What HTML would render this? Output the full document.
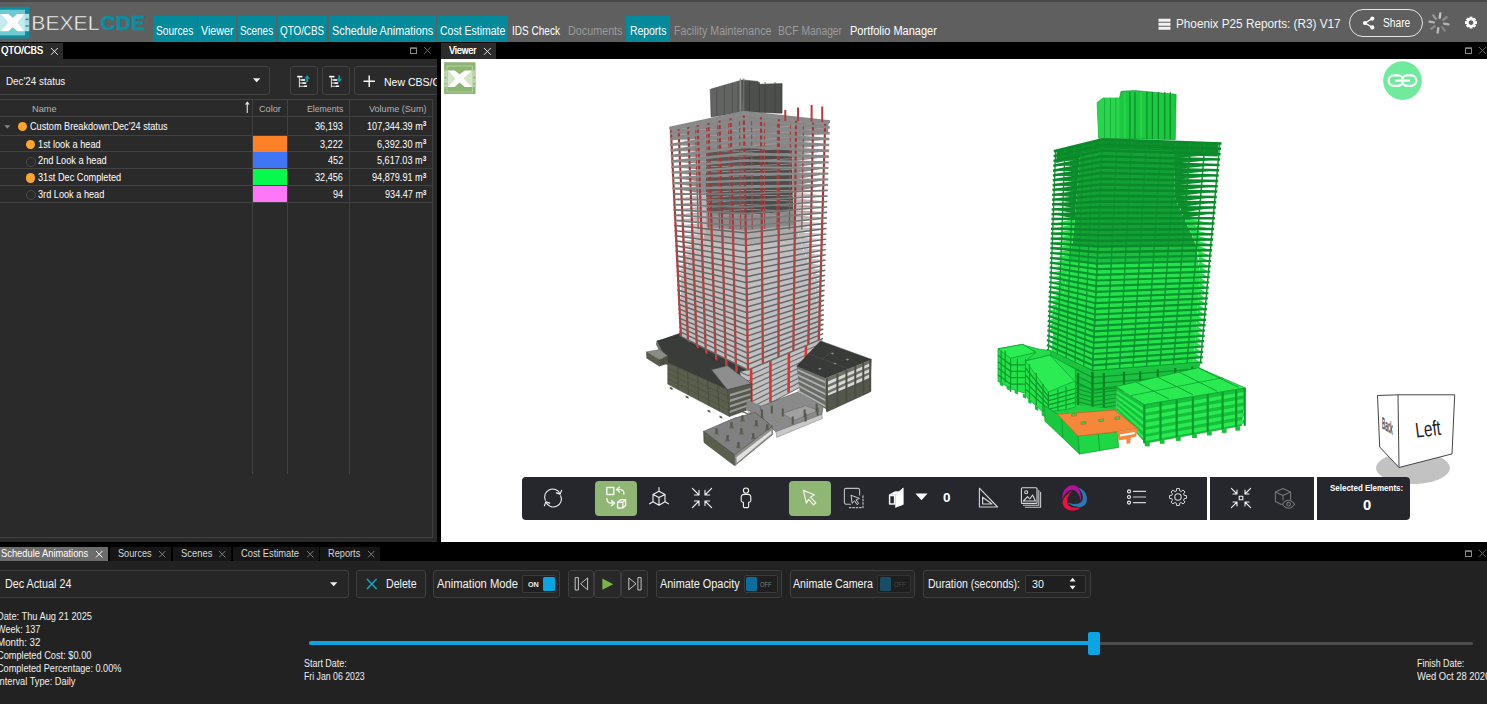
<!DOCTYPE html>
<html><head><meta charset="utf-8"><title>BEXEL CDE</title>
<style>
html,body{margin:0;padding:0;background:#000;}
body{width:1487px;height:704px;overflow:hidden;font-family:"Liberation Sans",sans-serif;}
#root{position:relative;width:1487px;height:704px;overflow:hidden;background:#000;}
#root span{font-family:"Liberation Sans",sans-serif;}
</style></head><body><div id="root">
<div style="position:absolute;left:0px;top:0px;width:1487px;height:42.4px;background:#5f5f5f;"></div>
<div style="position:absolute;left:0px;top:0px;width:1487px;height:2px;background:#484848;"></div>
<div style="position:absolute;left:152.5px;top:16px;width:44.0px;height:26.6px;background:#038a9b;"></div>
<div style="position:absolute;left:198px;top:16px;width:38px;height:26.6px;background:#038a9b;"></div>
<div style="position:absolute;left:237.5px;top:16px;width:38.5px;height:26.6px;background:#038a9b;"></div>
<div style="position:absolute;left:277.5px;top:16px;width:49.5px;height:26.6px;background:#038a9b;"></div>
<div style="position:absolute;left:328.5px;top:16px;width:107.0px;height:26.6px;background:#038a9b;"></div>
<div style="position:absolute;left:437px;top:16px;width:71px;height:26.6px;background:#038a9b;"></div>
<div style="position:absolute;left:626.3px;top:16px;width:43.3px;height:26.6px;background:#038a9b;"></div>
<span style="position:absolute;display:block;top:24.10px;font-size:12.5px;line-height:15.00px;color:#fff;white-space:nowrap;transform:scaleX(0.8113);transform-origin:0 0;left:156.10px;">Sources</span>
<span style="position:absolute;display:block;top:24.10px;font-size:12.5px;line-height:15.00px;color:#fff;white-space:nowrap;transform:scaleX(0.8557);transform-origin:0 0;left:200.80px;">Viewer</span>
<span style="position:absolute;display:block;top:24.10px;font-size:12.5px;line-height:15.00px;color:#fff;white-space:nowrap;transform:scaleX(0.7939);transform-origin:0 0;left:240.30px;">Scenes</span>
<span style="position:absolute;display:block;top:24.10px;font-size:12.5px;line-height:15.00px;color:#fff;white-space:nowrap;transform:scaleX(0.7871);transform-origin:0 0;left:280.40px;">QTO/CBS</span>
<span style="position:absolute;display:block;top:24.10px;font-size:12.5px;line-height:15.00px;color:#fff;white-space:nowrap;transform:scaleX(0.8669);transform-origin:0 0;left:331.50px;">Schedule Animations</span>
<span style="position:absolute;display:block;top:24.10px;font-size:12.5px;line-height:15.00px;color:#fff;white-space:nowrap;transform:scaleX(0.8393);transform-origin:0 0;left:439.70px;">Cost Estimate</span>
<span style="position:absolute;display:block;top:24.10px;font-size:12.5px;line-height:15.00px;color:#fff;white-space:nowrap;transform:scaleX(0.8018);transform-origin:0 0;left:512.40px;">IDS Check</span>
<span style="position:absolute;display:block;top:24.10px;font-size:12.5px;line-height:15.00px;color:#9b9b9b;white-space:nowrap;transform:scaleX(0.8621);transform-origin:0 0;left:567.70px;">Documents</span>
<span style="position:absolute;display:block;top:24.10px;font-size:12.5px;line-height:15.00px;color:#fff;white-space:nowrap;transform:scaleX(0.8317);transform-origin:0 0;left:630.00px;">Reports</span>
<span style="position:absolute;display:block;top:24.10px;font-size:12.5px;line-height:15.00px;color:#9b9b9b;white-space:nowrap;transform:scaleX(0.8558);transform-origin:0 0;left:673.50px;">Facility Maintenance</span>
<span style="position:absolute;display:block;top:24.10px;font-size:12.5px;line-height:15.00px;color:#9b9b9b;white-space:nowrap;transform:scaleX(0.8226);transform-origin:0 0;left:778.40px;">BCF Manager</span>
<span style="position:absolute;display:block;top:24.10px;font-size:12.5px;line-height:15.00px;color:#fff;white-space:nowrap;transform:scaleX(0.8808);transform-origin:0 0;left:849.60px;">Portfolio Manager</span>
<svg style="position:absolute;left:0;top:6px" width="30" height="34" viewBox="0 0 30 34">
<rect x="-3" y="0.8" width="32.2" height="31.6" fill="#0a8fa1"/>
<rect x="-3" y="3.75" width="28" height="25.6" fill="#6fc9d1"/>
<rect x="25" y="7.9" width="4.2" height="17.3" fill="#a9dee4"/>
<rect x="25.6" y="12.7" width="3" height="1.4" fill="#0a8fa1"/><rect x="25.6" y="19.3" width="3" height="1.4" fill="#0a8fa1"/>
<path d="M-3 7.9H0.9L8 16.6L0.9 25.2H-3ZM24.9 7.9L17.6 16.6L24.9 25.2Z" fill="#c6ebee"/>
<path d="M0.9 7.9H8.3L12.8 11.8L17.3 7.9H24.7L17.6 16.6L24.7 25.2H17.3L12.8 21.3L8.3 25.2H0.9L8 16.6Z" fill="#fff"/>
</svg>
<svg style="position:absolute;left:30px;top:10px" width="120" height="26"><text x="1.3" y="19.85" font-family="Liberation Sans, sans-serif" font-size="20.6" textLength="68.2" lengthAdjust="spacingAndGlyphs" fill="#f6f6f6" stroke="#5f5f5f" stroke-width="0.45" paint-order="fill stroke">BEXEL</text>
<text x="70.6" y="20" font-family="Liberation Sans, sans-serif" font-size="21" font-weight="bold" textLength="44.4" lengthAdjust="spacingAndGlyphs" fill="#0a8fa1" stroke="#0a8fa1" stroke-width="0.5">CDE</text></svg>
<svg style="position:absolute;left:1158px;top:18px" width="14" height="13"><path d="M0.5 2.2H12.5M0.5 6.2H12.5M0.5 10.2H12.5" stroke="#f2f2f2" stroke-width="3"/></svg>
<span style="position:absolute;display:block;top:16.16px;font-size:13.4px;line-height:16.08px;color:#f4f4f4;white-space:nowrap;transform:scaleX(0.8775);transform-origin:0 0;left:1176.00px;">Phoenix P25 Reports: (R3) V17</span>
<div style="position:absolute;left:1349px;top:9px;width:72px;height:26px;border:1px solid #e6e6e6;border-radius:14px"></div>
<svg style="position:absolute;left:1362px;top:16px" width="14" height="14"><path d="M10.3 2.6L3 7L10.3 11.4" stroke="#fff" stroke-width="1.3" fill="none"/><circle cx="10.3" cy="2.6" r="2.1" fill="#fff"/><circle cx="3" cy="7" r="2.1" fill="#fff"/><circle cx="10.3" cy="11.4" r="2.1" fill="#fff"/></svg>
<span style="position:absolute;display:block;top:15.70px;font-size:12.5px;line-height:15.00px;color:#fff;white-space:nowrap;transform:scaleX(0.8185);transform-origin:0 0;left:1382.70px;">Share</span>
<svg style="position:absolute;left:1426.7px;top:10.6px" width="24" height="24"><path d="M12.72 6.85L13.34 2.49" stroke="#c4c4c4" stroke-width="2.3" stroke-linecap="round"/><path d="M16.15 8.87L19.67 6.22" stroke="#8c8c8c" stroke-width="2.3" stroke-linecap="round"/><path d="M17.15 12.72L21.51 13.34" stroke="#b4b4b4" stroke-width="2.3" stroke-linecap="round"/><path d="M15.13 16.15L17.78 19.67" stroke="#858585" stroke-width="2.3" stroke-linecap="round"/><path d="M11.28 17.15L10.66 21.51" stroke="#b9b9b9" stroke-width="2.3" stroke-linecap="round"/><path d="M7.85 15.13L4.33 17.78" stroke="#8a8a8a" stroke-width="2.3" stroke-linecap="round"/><path d="M6.85 11.28L2.49 10.66" stroke="#b4b4b4" stroke-width="2.3" stroke-linecap="round"/><path d="M8.87 7.85L6.22 4.33" stroke="#9a9a9a" stroke-width="2.3" stroke-linecap="round"/></svg>
<svg style="position:absolute;left:1463px;top:15px" width="16" height="16"><g transform="translate(8,7.6) scale(0.9)"><circle r="4" fill="none" stroke="#fff" stroke-width="2.6"/><rect x="-1.6" y="-6.6" width="3.2" height="3.4" fill="#fff" transform="rotate(0)"/><rect x="-1.6" y="-6.6" width="3.2" height="3.4" fill="#fff" transform="rotate(45)"/><rect x="-1.6" y="-6.6" width="3.2" height="3.4" fill="#fff" transform="rotate(90)"/><rect x="-1.6" y="-6.6" width="3.2" height="3.4" fill="#fff" transform="rotate(135)"/><rect x="-1.6" y="-6.6" width="3.2" height="3.4" fill="#fff" transform="rotate(180)"/><rect x="-1.6" y="-6.6" width="3.2" height="3.4" fill="#fff" transform="rotate(225)"/><rect x="-1.6" y="-6.6" width="3.2" height="3.4" fill="#fff" transform="rotate(270)"/><rect x="-1.6" y="-6.6" width="3.2" height="3.4" fill="#fff" transform="rotate(315)"/></g></svg>
<div style="position:absolute;left:0px;top:42.4px;width:1487px;height:16.1px;background:#000;"></div>
<div style="position:absolute;left:0px;top:43px;width:63px;height:15.5px;background:#2b2b2b;"></div>
<span style="position:absolute;display:block;top:45.08px;font-size:10.2px;line-height:12.24px;color:#fff;white-space:nowrap;transform:scaleX(0.9208);transform-origin:0 0;left:0.90px;text-shadow:0.2px 0 0 #fff;">QTO/CBS</span>
<svg style="position:absolute;left:49.6px;top:46.6px" width="8.8" height="8.8"><path d="M1 1L7.8 7.8M7.8 1L1 7.8" stroke="#e8e8e8" stroke-width="1" fill="none"/></svg>
<svg style="position:absolute;left:410px;top:47px" width="8" height="8"><rect x="0.5" y="1" width="6" height="5.5" stroke="#8a8a8a" stroke-width="1" fill="none"/><path d="M0.5 1.2H6.5" stroke="#8a8a8a" stroke-width="1.4"/></svg>
<svg style="position:absolute;left:423.1px;top:46.1px" width="8.8" height="8.8"><path d="M1 1L7.8 7.8M7.8 1L1 7.8" stroke="#6a6a6a" stroke-width="1" fill="none"/></svg>
<div style="position:absolute;left:440.5px;top:43px;width:55px;height:15.5px;background:#2b2b2b;"></div>
<span style="position:absolute;display:block;top:45.08px;font-size:10.2px;line-height:12.24px;color:#fff;white-space:nowrap;transform:scaleX(0.8841);transform-origin:0 0;left:448.80px;text-shadow:0.2px 0 0 #fff;">Viewer</span>
<svg style="position:absolute;left:482.6px;top:46.6px" width="8.8" height="8.8"><path d="M1 1L7.8 7.8M7.8 1L1 7.8" stroke="#e8e8e8" stroke-width="1" fill="none"/></svg>
<svg style="position:absolute;left:1465px;top:47px" width="8" height="8"><rect x="0.5" y="1" width="6" height="5.5" stroke="#8a8a8a" stroke-width="1" fill="none"/><path d="M0.5 1.2H6.5" stroke="#8a8a8a" stroke-width="1.4"/></svg>
<svg style="position:absolute;left:1477.6px;top:46.1px" width="8.8" height="8.8"><path d="M1 1L7.8 7.8M7.8 1L1 7.8" stroke="#6a6a6a" stroke-width="1" fill="none"/></svg>
<div style="position:absolute;left:0px;top:58.5px;width:437px;height:483.5px;background:#2a2a2a;"></div>
<div style="position:absolute;left:437px;top:58.5px;width:3.5px;height:483.5px;background:#000;"></div>
<div style="position:absolute;left:0px;top:537.2px;width:433px;height:1px;background:#424242;"></div>
<div style="position:absolute;left:-3px;top:66.2px;width:271px;height:26.6px;border:1px solid #424242;border-radius:3px;background:#2a2a2a"></div>
<span style="position:absolute;display:block;top:75.22px;font-size:11.3px;line-height:13.56px;color:#f4f4f4;white-space:nowrap;transform:scaleX(0.8707);transform-origin:0 0;left:5.50px;">Dec'24 status</span>
<svg style="position:absolute;left:253px;top:78px" width="8" height="5"><path d="M0 0.3H7.4L3.7 4.3Z" fill="#f0f0f0"/></svg>
<div style="position:absolute;left:290px;top:66.2px;width:25.6px;height:26.6px;border:1px solid #424242;border-radius:3px;background:transparent"></div>
<div style="position:absolute;left:322px;top:66.2px;width:25.6px;height:26.6px;border:1px solid #424242;border-radius:3px;background:transparent"></div>
<svg style="position:absolute;left:297px;top:74.7px" width="14" height="14"><rect x="0.2" y="0.8" width="5.2" height="1.7" fill="#fff"/><path d="M2.4 2.4V12.3M2.4 4.95H8M2.4 8.05H9M2.4 11.25H10" stroke="#eee" stroke-width="0.9" fill="none"/><rect x="4.3" y="4.3" width="3.9" height="1.4" fill="#fff"/><rect x="5.4" y="7.4" width="3.8" height="1.4" fill="#fff"/><rect x="6.9" y="10.5" width="3.2" height="1.5" fill="#fff"/><path d="M10.2 0.2L13.2 3.6H11.1V7H9.3V3.6H7.2Z" fill="#0b9db2"/></svg>
<svg style="position:absolute;left:329px;top:74.7px" width="14" height="14"><rect x="0.2" y="0.8" width="5.2" height="1.7" fill="#fff"/><path d="M2.4 2.4V12.3M2.4 4.95H8M2.4 8.05H9M2.4 11.25H10" stroke="#eee" stroke-width="0.9" fill="none"/><rect x="4.3" y="4.3" width="3.9" height="1.4" fill="#fff"/><rect x="5.4" y="7.4" width="3.8" height="1.4" fill="#fff"/><rect x="6.9" y="10.5" width="3.2" height="1.5" fill="#fff"/><path d="M9.3 0.4H11.1V3.8H13.2L10.2 7.2L7.2 3.8H9.3Z" fill="#0b9db2"/></svg>
<div style="position:absolute;left:354px;top:66px;width:83px;height:30px;overflow:hidden"><div style="position:absolute;left:0;top:0.2px;width:120px;height:26.6px;border:1px solid #424242;border-radius:3px"></div></div>
<svg style="position:absolute;left:363px;top:75px" width="13" height="13"><path d="M6.2 0.5V12M0.5 6.2H12" stroke="#fff" stroke-width="1.4"/></svg>
<div style="position:absolute;left:380px;top:70px;width:57px;height:24px;overflow:hidden"><span style="position:absolute;display:block;top:4.82px;font-size:11.8px;line-height:14.16px;color:#fff;white-space:nowrap;transform:scaleX(0.8907);transform-origin:0 0;left:3.80px;">New CBS/CIS</span></div>
<div style="position:absolute;left:0px;top:99px;width:432.5px;height:1px;background:#424242;"></div>
<div style="position:absolute;left:0px;top:116px;width:432.5px;height:1px;background:#424242;"></div>
<div style="position:absolute;left:0px;top:134.8px;width:432.5px;height:1px;background:#424242;"></div>
<div style="position:absolute;left:0px;top:151.4px;width:432.5px;height:1px;background:#424242;"></div>
<div style="position:absolute;left:0px;top:168.1px;width:432.5px;height:1px;background:#424242;"></div>
<div style="position:absolute;left:0px;top:184.8px;width:432.5px;height:1px;background:#424242;"></div>
<div style="position:absolute;left:0px;top:201.8px;width:432.5px;height:1px;background:#424242;"></div>
<div style="position:absolute;left:252.4px;top:99px;width:1px;height:374.5px;background:#424242;"></div>
<div style="position:absolute;left:286.8px;top:99px;width:1px;height:374.5px;background:#424242;"></div>
<div style="position:absolute;left:349px;top:99px;width:1px;height:374.5px;background:#424242;"></div>
<div style="position:absolute;left:432px;top:99px;width:1px;height:438px;background:#424242;"></div>
<span style="position:absolute;display:block;top:103.12px;font-size:9.8px;line-height:11.76px;color:#b4b4b4;white-space:nowrap;transform:scaleX(0.9411);transform-origin:0 0;left:32.40px;">Name</span>
<span style="position:absolute;display:block;top:103.12px;font-size:9.8px;line-height:11.76px;color:#b4b4b4;white-space:nowrap;transform:scaleX(0.9352);transform-origin:0 0;left:258.90px;">Color</span>
<span style="position:absolute;display:block;top:103.12px;font-size:9.8px;line-height:11.76px;color:#b4b4b4;white-space:nowrap;transform:scaleX(0.8886);transform-origin:0 0;left:306.80px;">Elements</span>
<span style="position:absolute;display:block;top:103.12px;font-size:9.8px;line-height:11.76px;color:#b4b4b4;white-space:nowrap;transform:scaleX(0.9262);transform-origin:0 0;left:368.70px;">Volume (Sum)</span>
<svg style="position:absolute;left:243.5px;top:101px" width="7" height="13"><path d="M3.3 12V2.5" stroke="#c8c8c8" stroke-width="1.3" fill="none"/><path d="M0.9 3.4L3.3 0.3L5.7 3.4Z" fill="#e0e0e0"/></svg>
<svg style="position:absolute;left:3.5px;top:124.5px" width="7" height="5"><path d="M0.3 0.3H6.3L3.3 3.6Z" fill="#8a8a8a"/></svg>
<span style="position:absolute;display:block;top:120.62px;font-size:10.3px;line-height:12.36px;color:#fff;white-space:nowrap;transform:scaleX(0.8888);transform-origin:0 0;left:30.30px;">Custom Breakdown:Dec'24 status</span>
<div style="position:absolute;left:17.9px;top:121.9px;width:9.2px;height:9.2px;border-radius:50%;background:#ffa52e"></div>
<span style="position:absolute;display:block;top:120.62px;font-size:10.3px;line-height:12.36px;color:#fff;white-space:nowrap;transform:scaleX(0.8850);transform-origin:0 0;left:315.42px;">36,193</span>
<span style="position:absolute;display:block;top:120.62px;font-size:10.3px;line-height:12.36px;color:#fff;white-space:nowrap;transform:scaleX(0.8850);transform-origin:0 0;left:366.86px;">107,344.39 m</span>
<span style="position:absolute;display:block;top:120.30px;font-size:6.5px;line-height:7.80px;color:#fff;white-space:nowrap;font-weight:bold;left:422.70px;">3</span>
<span style="position:absolute;display:block;top:138.72px;font-size:10.3px;line-height:12.36px;color:#fff;white-space:nowrap;transform:scaleX(0.8976);transform-origin:0 0;left:38.30px;">1st look a head</span>
<div style="position:absolute;left:25.700000000000003px;top:140.0px;width:9.2px;height:9.2px;border-radius:50%;background:#ffa52e"></div>
<div style="position:absolute;left:253.3px;top:135.8px;width:33.6px;height:15.9px;background:#ff8127;"></div>
<span style="position:absolute;display:block;top:138.72px;font-size:10.3px;line-height:12.36px;color:#fff;white-space:nowrap;transform:scaleX(0.8850);transform-origin:0 0;left:320.49px;">3,222</span>
<span style="position:absolute;display:block;top:138.72px;font-size:10.3px;line-height:12.36px;color:#fff;white-space:nowrap;transform:scaleX(0.8850);transform-origin:0 0;left:377.00px;">6,392.30 m</span>
<span style="position:absolute;display:block;top:138.40px;font-size:6.5px;line-height:7.80px;color:#fff;white-space:nowrap;font-weight:bold;left:422.70px;">3</span>
<span style="position:absolute;display:block;top:155.42px;font-size:10.3px;line-height:12.36px;color:#fff;white-space:nowrap;transform:scaleX(0.8952);transform-origin:0 0;left:38.30px;">2nd Look a head</span>
<div style="position:absolute;left:25.5px;top:156.5px;width:8.6px;height:8.6px;border-radius:50%;border:1px solid #4a4a4a"></div>
<div style="position:absolute;left:253.3px;top:152.3px;width:33.6px;height:15.9px;background:#4076f5;"></div>
<span style="position:absolute;display:block;top:155.42px;font-size:10.3px;line-height:12.36px;color:#fff;white-space:nowrap;transform:scaleX(0.8850);transform-origin:0 0;left:328.09px;">452</span>
<span style="position:absolute;display:block;top:155.42px;font-size:10.3px;line-height:12.36px;color:#fff;white-space:nowrap;transform:scaleX(0.8850);transform-origin:0 0;left:377.00px;">5,617.03 m</span>
<span style="position:absolute;display:block;top:155.10px;font-size:6.5px;line-height:7.80px;color:#fff;white-space:nowrap;font-weight:bold;left:422.70px;">3</span>
<span style="position:absolute;display:block;top:172.12px;font-size:10.3px;line-height:12.36px;color:#fff;white-space:nowrap;transform:scaleX(0.8916);transform-origin:0 0;left:38.30px;">31st Dec Completed</span>
<div style="position:absolute;left:25.700000000000003px;top:173.39999999999998px;width:9.2px;height:9.2px;border-radius:50%;background:#ffa52e"></div>
<div style="position:absolute;left:253.3px;top:169.0px;width:33.6px;height:15.9px;background:#08f94e;"></div>
<span style="position:absolute;display:block;top:172.12px;font-size:10.3px;line-height:12.36px;color:#fff;white-space:nowrap;transform:scaleX(0.8850);transform-origin:0 0;left:315.42px;">32,456</span>
<span style="position:absolute;display:block;top:172.12px;font-size:10.3px;line-height:12.36px;color:#fff;white-space:nowrap;transform:scaleX(0.8850);transform-origin:0 0;left:371.93px;">94,879.91 m</span>
<span style="position:absolute;display:block;top:171.80px;font-size:6.5px;line-height:7.80px;color:#fff;white-space:nowrap;font-weight:bold;left:422.70px;">3</span>
<span style="position:absolute;display:block;top:188.82px;font-size:10.3px;line-height:12.36px;color:#fff;white-space:nowrap;transform:scaleX(0.8906);transform-origin:0 0;left:38.30px;">3rd Look a head</span>
<div style="position:absolute;left:25.5px;top:189.9px;width:8.6px;height:8.6px;border-radius:50%;border:1px solid #4a4a4a"></div>
<div style="position:absolute;left:253.3px;top:185.8px;width:33.6px;height:15.9px;background:#ff76f8;"></div>
<span style="position:absolute;display:block;top:188.82px;font-size:10.3px;line-height:12.36px;color:#fff;white-space:nowrap;transform:scaleX(0.8850);transform-origin:0 0;left:333.16px;">94</span>
<span style="position:absolute;display:block;top:188.82px;font-size:10.3px;line-height:12.36px;color:#fff;white-space:nowrap;transform:scaleX(0.8850);transform-origin:0 0;left:384.60px;">934.47 m</span>
<span style="position:absolute;display:block;top:188.50px;font-size:6.5px;line-height:7.80px;color:#fff;white-space:nowrap;font-weight:bold;left:422.70px;">3</span>
<div style="position:absolute;left:440.5px;top:58.5px;width:1046.5px;height:483.5px;background:#fff"></div>
<svg style="position:absolute;left:0;top:0" width="1487" height="704" viewBox="0 0 1487 704"><polygon points="710.2,89.3 742.3,79.9 743.8,112.0 711.1,116.9" fill="#626461" stroke="#3c3e3c" stroke-width="0.5" stroke-linejoin="round"/><polygon points="742.3,79.9 758.0,81.4 759.4,84.2 782.1,83.6 782.1,113.2 743.8,112.0" fill="#4d4f4c" stroke="#333" stroke-width="0.5" stroke-linejoin="round"/><path d="M716.8 87.4 L716.8 116.0" fill="none" stroke="#4a4c4a" stroke-width="0.7" /><path d="M724.4 85.2 L724.4 114.9" fill="none" stroke="#4a4c4a" stroke-width="0.7" /><path d="M732.4 82.9 L732.4 113.7" fill="none" stroke="#4a4c4a" stroke-width="0.7" /><path d="M738.1 81.2 L738.1 112.8" fill="none" stroke="#4a4c4a" stroke-width="0.7" /><path d="M749.4 81.9 L749.4 112.6" fill="none" stroke="#3a3c3a" stroke-width="0.7" /><path d="M759.4 81.9 L759.4 112.6" fill="none" stroke="#3a3c3a" stroke-width="0.7" /><path d="M765.1 81.9 L765.1 112.6" fill="none" stroke="#3a3c3a" stroke-width="0.7" /><path d="M775.0 81.9 L775.0 112.6" fill="none" stroke="#3a3c3a" stroke-width="0.7" /><path d="M740.3 78.5 L740.3 112.6" fill="none" stroke="#8a8c8a" stroke-width="1.2" /><path d="M743.8 78.5 L743.8 112.6" fill="none" stroke="#787a78" stroke-width="1.0" /><polygon points="656.9,340.9 680.0,333.0 748.0,365.0 751.4,383.7 727.0,389.0" fill="#3a3c3a"/><polygon points="748.0,370.0 822.5,338.5 821.3,375.4 748.7,413.9 744.0,400.0 740.0,372.0" fill="#c0c0c0"/><path d="M740.1 372.0 L748.1 375.5 L822.3 343.2" fill="none" stroke="#6e6e6e" stroke-width="1.2" /><path d="M740.2 377.6 L748.2 381.1 L822.2 347.8" fill="none" stroke="#6e6e6e" stroke-width="1.2" /><path d="M740.3 383.1 L748.3 386.6 L822.0 352.5" fill="none" stroke="#6e6e6e" stroke-width="1.2" /><path d="M740.4 388.7 L748.4 392.2 L821.9 357.1" fill="none" stroke="#6e6e6e" stroke-width="1.2" /><path d="M740.5 394.2 L748.5 397.7 L821.7 361.8" fill="none" stroke="#6e6e6e" stroke-width="1.2" /><path d="M740.5 399.8 L748.5 403.3 L821.6 366.5" fill="none" stroke="#6e6e6e" stroke-width="1.2" /><path d="M740.6 405.3 L748.6 408.8 L821.4 371.1" fill="none" stroke="#6e6e6e" stroke-width="1.2" /><path d="M740.7 410.9 L748.7 414.4 L821.3 375.8" fill="none" stroke="#6e6e6e" stroke-width="1.2" /><path d="M751.0 362.7 L751.6 412.3" fill="none" stroke="#d23838" stroke-width="2.6" /><path d="M770.4 354.6 L770.5 402.3" fill="none" stroke="#d23838" stroke-width="2.6" /><path d="M789.0 346.7 L788.6 392.7" fill="none" stroke="#d23838" stroke-width="2.6" /><path d="M806.1 339.4 L805.3 383.8" fill="none" stroke="#d23838" stroke-width="2.6" /><path d="M680.7 332.0 L681.0 344.0" fill="none" stroke="#d23838" stroke-width="2.4" /><path d="M688.5 335.9 L688.8 347.9" fill="none" stroke="#d23838" stroke-width="2.4" /><path d="M697.3 340.3 L697.6 352.3" fill="none" stroke="#d23838" stroke-width="2.4" /><path d="M706.1 344.8 L706.4 356.8" fill="none" stroke="#d23838" stroke-width="2.4" /><path d="M716.0 349.7 L716.3 361.7" fill="none" stroke="#d23838" stroke-width="2.4" /><path d="M726.1 354.8 L726.4 366.8" fill="none" stroke="#d23838" stroke-width="2.4" /><path d="M736.3 359.9 L736.6 371.9" fill="none" stroke="#d23838" stroke-width="2.4" /><polygon points="671.4,138.4 671.4,138.0 671.4,137.5 671.4,137.1 671.3,136.7 671.3,136.2 671.3,135.8 671.3,135.4 671.2,134.9 671.2,134.5 671.2,134.1 671.2,133.6 671.2,133.2 671.1,132.8 671.1,132.3 671.1,131.9 671.1,131.5 671.1,131.0 671.0,130.6 671.0,130.2 671.0,129.7 671.0,129.3 670.9,128.8 670.9,128.4 670.9,128.0 743.8,112.0 828.5,121.6 828.5,122.0 828.5,122.5 828.5,122.9 828.4,123.4 828.4,123.9 828.4,124.3 828.4,124.8 828.4,125.2 828.4,125.7 828.4,126.1 828.3,126.6 828.3,127.0 828.3,127.5 828.3,127.9 828.3,128.4 828.3,128.8 828.3,129.3 828.2,129.7 828.2,130.2 828.2,130.6 828.2,131.1 828.2,131.5 828.2,132.0 828.1,132.5 744.0,124.9" fill="#8c8c8c"/><polygon points="706.6,226.9 706.6,223.3 706.5,219.8 706.5,216.2 706.4,212.7 706.3,209.1 706.3,205.6 706.2,202.0 706.1,198.5 706.1,194.9 706.0,191.4 706.0,187.8 706.0,184.2 706.0,180.7 706.0,177.1 706.0,173.5 706.0,170.0 706.0,166.4 706.0,162.8 706.0,159.2 705.9,155.7 705.9,152.1 705.9,148.5 705.9,144.9 705.9,141.3 744.1,135.2 791.8,138.6 791.8,142.2 791.9,145.8 791.9,149.5 792.0,153.1 792.0,156.7 792.0,160.3 792.1,163.9 792.1,167.6 792.2,171.2 792.2,174.8 792.3,178.4 792.3,182.0 792.4,185.6 792.5,189.2 792.6,192.8 792.8,196.4 793.0,200.0 793.2,203.6 793.4,207.2 793.6,210.8 793.7,214.4 793.9,218.0 794.1,221.5 794.3,225.1 745.7,230.7" fill="#565855"/><polygon points="745.7,230.7 745.6,226.7 745.6,222.7 745.5,218.7 745.4,214.8 745.4,210.8 745.3,206.8 745.2,202.8 745.2,198.9 745.1,194.9 745.0,190.9 745.0,186.9 744.9,182.9 744.9,179.0 744.8,175.0 744.7,171.0 744.7,167.0 744.6,163.1 744.5,159.1 744.5,155.1 744.4,151.1 744.3,147.2 744.3,143.2 744.2,139.2 744.1,135.2 744.1,135.2 791.8,138.6 791.8,142.2 791.9,145.8 791.9,149.5 792.0,153.1 792.0,156.7 792.0,160.3 792.1,163.9 792.1,167.6 792.2,171.2 792.2,174.8 792.3,178.4 792.3,182.0 792.4,185.6 792.5,189.2 792.6,192.8 792.8,196.4 793.0,200.0 793.2,203.6 793.4,207.2 793.6,210.8 793.7,214.4 793.9,218.0 794.1,221.5 794.3,225.1 745.7,230.7" fill="#4a4c49"/><polygon points="705.2,150.7 704.4,149.6 703.5,148.4 702.6,147.3 701.8,146.2 700.9,145.1 700.0,144.0 699.2,142.9 698.3,141.8 697.4,140.7 696.6,139.6 695.7,138.5 694.8,137.4 694.0,136.4 693.1,135.3 692.0,134.3 689.9,133.5 687.9,132.7 685.9,131.8 683.9,131.1 681.9,130.3 679.9,129.5 677.9,128.8 675.9,128.0 673.9,127.3 743.8,112.0 825.5,121.2 823.1,122.2 820.7,123.1 818.2,124.0 815.8,125.0 813.4,126.0 811.0,127.0 808.6,127.9 806.1,129.0 803.7,130.0 802.5,131.1 801.6,132.3 800.8,133.5 799.9,134.6 799.1,135.8 798.2,137.0 797.4,138.2 796.5,139.4 795.7,140.6 794.8,141.8 794.0,143.0 793.1,144.3 792.3,145.5 791.4,146.7 790.6,147.9 744.3,145.5" fill="#878787"/><polygon points="681.7,336.8 681.6,331.6 681.5,326.4 681.3,321.3 681.2,316.1 681.1,310.9 681.0,305.7 680.8,300.5 680.7,295.3 680.6,290.1 680.5,284.9 680.3,279.7 682.3,275.1 684.7,270.5 687.2,265.8 689.6,261.0 692.1,256.1 695.1,251.1 698.1,246.1 701.1,241.0 704.0,235.7 704.5,230.1 705.0,224.5 705.5,218.8 706.0,213.1 745.5,215.2 792.7,211.3 794.0,217.0 795.4,222.7 796.7,228.3 798.0,233.9 799.9,239.4 801.7,244.8 803.6,250.2 805.5,255.5 807.4,260.8 809.2,266.0 811.1,271.2 813.0,276.3 814.6,281.4 815.1,286.8 815.6,292.2 816.1,297.5 816.6,302.8 817.2,308.1 817.7,313.4 818.2,318.6 818.5,323.9 818.9,329.2 819.2,334.5 819.5,339.8 748.0,370.0" fill="#bfbfbf"/><polygon points="705.8,229.1 705.8,228.4 705.8,227.8 705.7,227.1 705.7,226.4 705.7,225.7 705.7,225.1 705.6,224.4 705.6,223.7 705.6,223.1 705.6,222.4 705.5,221.7 705.5,221.1 705.5,220.4 705.5,219.7 705.4,219.0 705.4,218.4 705.4,217.7 705.4,217.0 705.3,216.4 705.3,215.7 705.3,215.0 705.3,214.4 705.2,213.7 705.2,213.0 745.5,215.2 794.3,211.1 794.3,211.8 794.3,212.5 794.3,213.2 794.3,213.8 794.3,214.5 794.2,215.2 794.2,215.9 794.2,216.6 794.2,217.2 794.2,217.9 794.2,218.6 794.2,219.3 794.2,220.0 794.2,220.6 794.2,221.3 794.2,222.0 794.2,222.7 794.1,223.4 794.1,224.1 794.1,224.7 794.1,225.4 794.1,226.1 794.1,226.8 794.1,227.5 745.7,233.3" fill="#8a8a8a"/><polygon points="704.2,240.3 704.2,239.7 704.2,239.2 704.2,238.6 704.1,238.0 704.1,237.5 704.1,236.9 704.1,236.3 704.0,235.7 704.0,235.2 704.0,234.6 704.0,234.0 704.0,233.5 703.9,232.9 703.9,232.3 703.9,231.7 703.9,231.2 703.9,230.6 703.8,230.0 703.8,229.5 703.8,228.9 703.8,228.3 703.8,227.8 703.7,227.2 703.7,226.6 745.7,230.7 797.7,224.7 797.7,225.3 797.6,225.9 797.6,226.5 797.6,227.0 797.6,227.6 797.6,228.2 797.6,228.8 797.6,229.3 797.6,229.9 797.6,230.5 797.5,231.1 797.5,231.7 797.5,232.2 797.5,232.8 797.5,233.4 797.5,234.0 797.5,234.6 797.5,235.1 797.5,235.7 797.5,236.3 797.5,236.9 797.4,237.5 797.4,238.0 797.4,238.6 746.0,246.2" fill="#acacac"/><polygon points="791.6,117.4 829.5,121.7 791.4,123.8" fill="#8a8a8a"/><polygon points="705.8,120.3 669.9,128.2 706.0,126.6" fill="#8a8a8a"/><polygon points="791.7,123.8 829.3,127.6 791.5,130.2" fill="#8a8a8a"/><polygon points="705.8,126.7 670.2,133.9 706.1,133.0" fill="#8a8a8a"/><polygon points="791.8,130.2 829.1,133.5 791.6,136.5" fill="#8a8a8a"/><polygon points="705.8,133.0 670.5,139.5 706.1,139.3" fill="#8a8a8a"/><polygon points="791.9,136.6 828.9,139.3 791.7,142.8" fill="#8a8a8a"/><polygon points="705.8,139.3 670.7,145.1 706.1,145.5" fill="#8a8a8a"/><polygon points="792.0,142.9 828.7,145.1 791.8,149.1" fill="#8a8a8a"/><polygon points="705.8,145.5 671.0,150.7 706.1,151.7" fill="#8a8a8a"/><polygon points="792.0,149.1 828.6,150.9 791.9,155.3" fill="#8a8a8a"/><polygon points="705.8,151.8 671.3,156.2 706.1,157.9" fill="#8a8a8a"/><polygon points="792.1,155.4 828.4,156.7 791.9,161.5" fill="#8a8a8a"/><polygon points="705.8,157.9 671.6,161.7 706.1,164.0" fill="#8a8a8a"/><polygon points="792.2,161.6 828.2,162.4 792.0,167.7" fill="#8a8a8a"/><polygon points="705.8,164.0 671.8,167.2 706.1,170.1" fill="#8a8a8a"/><polygon points="792.3,167.7 828.0,168.1 792.1,173.8" fill="#8a8a8a"/><polygon points="705.8,170.1 672.1,172.7 706.1,176.2" fill="#8a8a8a"/><polygon points="792.4,173.8 827.8,173.7 792.2,179.9" fill="#8a8a8a"/><polygon points="705.8,176.2 672.4,178.1 706.1,182.2" fill="#8a8a8a"/><polygon points="792.4,179.9 827.6,179.4 792.2,186.0" fill="#8a8a8a"/><polygon points="705.9,182.2 672.6,183.5 706.1,188.1" fill="#8a8a8a"/><polygon points="792.5,186.0 827.5,185.0 792.4,192.0" fill="#8a8a8a"/><polygon points="705.9,188.1 672.9,188.8 706.1,194.1" fill="#8a8a8a"/><polygon points="792.7,197.9 827.1,196.1 792.8,192.0" fill="#bfbfbf"/><polygon points="706.2,200.0 673.4,199.5 706.0,194.1" fill="#bfbfbf"/><polygon points="793.0,203.9 826.9,201.6 793.1,197.9" fill="#bfbfbf"/><polygon points="706.3,205.8 673.7,204.8 706.1,200.0" fill="#bfbfbf"/><polygon points="793.3,209.7 826.7,207.1 793.4,203.8" fill="#bfbfbf"/><polygon points="706.4,211.6 674.0,210.0 706.2,205.8" fill="#bfbfbf"/><polygon points="793.6,215.6 826.6,212.5 793.7,209.7" fill="#bfbfbf"/><polygon points="706.5,217.4 674.2,215.2 706.3,211.6" fill="#bfbfbf"/><polygon points="793.9,221.4 826.4,217.9 794.0,215.5" fill="#bfbfbf"/><polygon points="706.7,223.2 674.5,220.4 706.4,217.4" fill="#bfbfbf"/><polygon points="794.1,227.1 826.2,223.3 794.3,221.3" fill="#bfbfbf"/><polygon points="706.8,228.9 674.7,225.6 706.5,223.1" fill="#bfbfbf"/><polygon points="796.1,232.6 826.0,228.6 796.3,226.9" fill="#bfbfbf"/><polygon points="705.4,234.4 675.0,230.7 705.2,228.7" fill="#bfbfbf"/><polygon points="798.3,238.0 825.9,234.0 798.5,232.3" fill="#bfbfbf"/><polygon points="703.5,239.7 675.2,235.8 703.3,234.1" fill="#bfbfbf"/><polygon points="800.2,243.3 825.7,239.2 800.3,237.7" fill="#bfbfbf"/><polygon points="700.6,244.8 675.5,240.9 700.3,239.3" fill="#bfbfbf"/><polygon points="802.0,248.5 825.5,244.5 802.1,243.0" fill="#bfbfbf"/><polygon points="697.7,249.7 675.7,245.9 697.4,244.3" fill="#bfbfbf"/><polygon points="803.8,253.7 825.4,249.7 804.0,248.2" fill="#bfbfbf"/><polygon points="694.8,254.5 676.0,250.9 694.5,249.2" fill="#bfbfbf"/><polygon points="805.6,258.8 825.2,254.9 805.8,253.4" fill="#bfbfbf"/><polygon points="692.0,259.2 676.2,255.9 691.7,253.9" fill="#bfbfbf"/><polygon points="807.4,263.8 825.0,260.1 807.5,258.4" fill="#bfbfbf"/><polygon points="689.6,263.8 676.5,260.8 689.4,258.6" fill="#bfbfbf"/><polygon points="809.2,268.7 824.9,265.2 809.3,263.4" fill="#bfbfbf"/><polygon points="687.3,268.3 676.7,265.8 687.0,263.2" fill="#bfbfbf"/><polygon points="810.9,273.6 824.7,270.3 811.1,268.3" fill="#bfbfbf"/><polygon points="685.0,272.7 677.0,270.7 684.7,267.7" fill="#bfbfbf"/><polygon points="812.7,278.4 824.5,275.4 812.8,273.1" fill="#bfbfbf"/><polygon points="682.7,277.0 677.2,275.5 682.4,272.1" fill="#bfbfbf"/><polygon points="814.4,283.1 824.4,280.4 814.6,277.9" fill="#bfbfbf"/><polygon points="814.9,288.0 824.2,285.4 815.0,282.9" fill="#bfbfbf"/><polygon points="815.4,292.9 824.1,290.4 815.5,287.9" fill="#bfbfbf"/><polygon points="815.8,297.8 823.9,295.4 816.0,292.8" fill="#bfbfbf"/><polygon points="816.3,302.6 823.7,300.3 816.5,297.6" fill="#bfbfbf"/><polygon points="816.8,307.4 823.6,305.2 816.9,302.4" fill="#bfbfbf"/><polygon points="817.2,312.1 823.4,310.0 817.4,307.2" fill="#bfbfbf"/><polygon points="817.7,316.8 823.3,314.8 817.9,311.9" fill="#bfbfbf"/><polygon points="818.1,321.5 823.1,319.6 818.3,316.6" fill="#bfbfbf"/><polygon points="818.4,326.1 823.0,324.4 818.6,321.3" fill="#bfbfbf"/><polygon points="818.7,330.7 822.8,329.1 818.9,326.0" fill="#bfbfbf"/><path d="M669.9 128.2 L745.0 131.0 L829.5 121.7" fill="none" stroke="#a0a0a0" stroke-width="0.8" /><path d="M670.2 133.9 L745.0 136.1 L829.3 127.6" fill="none" stroke="#a0a0a0" stroke-width="0.8" /><path d="M670.5 139.5 L745.1 141.2 L829.1 133.5" fill="none" stroke="#a0a0a0" stroke-width="0.8" /><path d="M670.7 145.1 L745.1 146.2 L828.9 139.3" fill="none" stroke="#a0a0a0" stroke-width="0.8" /><path d="M671.0 150.7 L745.1 151.2 L828.7 145.1" fill="none" stroke="#a0a0a0" stroke-width="0.8" /><path d="M671.3 156.2 L745.1 156.2 L828.6 150.9" fill="none" stroke="#a0a0a0" stroke-width="0.8" /><path d="M671.6 161.7 L745.2 161.2 L828.4 156.7" fill="none" stroke="#a0a0a0" stroke-width="0.8" /><path d="M671.8 167.2 L745.2 166.1 L828.2 162.4" fill="none" stroke="#a0a0a0" stroke-width="0.8" /><path d="M672.1 172.7 L745.2 171.0 L828.0 168.1" fill="none" stroke="#a0a0a0" stroke-width="0.8" /><path d="M672.4 178.1 L745.2 175.9 L827.8 173.7" fill="none" stroke="#a0a0a0" stroke-width="0.8" /><path d="M672.6 183.5 L745.3 180.7 L827.6 179.4" fill="none" stroke="#a0a0a0" stroke-width="0.8" /><path d="M672.9 188.8 L745.3 185.6 L827.5 185.0" fill="none" stroke="#a0a0a0" stroke-width="0.8" /><path d="M673.2 194.2 L745.3 190.4 L827.3 190.5" fill="none" stroke="#a0a0a0" stroke-width="0.8" /><path d="M673.4 199.5 L745.3 195.2 L827.1 196.1" fill="none" stroke="#a0a0a0" stroke-width="0.8" /><path d="M673.7 204.8 L745.4 199.9 L826.9 201.6" fill="none" stroke="#a0a0a0" stroke-width="0.8" /><path d="M674.0 210.0 L745.4 204.6 L826.7 207.1" fill="none" stroke="#a0a0a0" stroke-width="0.8" /><path d="M674.2 215.2 L745.4 209.3 L826.6 212.5" fill="none" stroke="#a0a0a0" stroke-width="0.8" /><path d="M674.5 220.4 L745.4 214.0 L826.4 217.9" fill="none" stroke="#a0a0a0" stroke-width="0.8" /><path d="M695.5 127.0 L698.3 229.0" fill="none" stroke="#a84444" stroke-width="1.2" /><path d="M706.5 125.0 L708.9 229.0" fill="none" stroke="#a84444" stroke-width="1.2" /><path d="M717.5 123.0 L719.5 229.0" fill="none" stroke="#a84444" stroke-width="1.2" /><path d="M728.5 121.0 L730.1 229.0" fill="none" stroke="#a84444" stroke-width="1.2" /><path d="M739.5 119.0 L740.7 229.0" fill="none" stroke="#a84444" stroke-width="1.2" /><path d="M751.5 118.6 L752.2 229.1" fill="none" stroke="#a84444" stroke-width="1.2" /><path d="M764.5 119.8 L764.6 229.1" fill="none" stroke="#a84444" stroke-width="1.2" /><path d="M777.5 121.0 L777.0 229.2" fill="none" stroke="#a84444" stroke-width="1.2" /><path d="M790.5 122.2 L789.4 229.4" fill="none" stroke="#a84444" stroke-width="1.2" /><path d="M803.5 123.4 L801.8 229.4" fill="none" stroke="#a84444" stroke-width="1.2" /><path d="M670.8 128.0 L675.4 221.8" fill="none" stroke="#a83434" stroke-width="2.1" /><path d="M678.4 126.3 L682.7 222.4" fill="none" stroke="#a83434" stroke-width="2.1" /><path d="M688.0 124.2 L692.0 223.3" fill="none" stroke="#a83434" stroke-width="2.1" /><path d="M697.6 122.1 L701.2 224.1" fill="none" stroke="#a83434" stroke-width="2.1" /><path d="M708.3 119.8 L711.5 225.0" fill="none" stroke="#a83434" stroke-width="2.1" /><path d="M719.4 117.3 L722.2 226.0" fill="none" stroke="#a83434" stroke-width="2.1" /><path d="M730.5 114.9 L732.9 226.9" fill="none" stroke="#a83434" stroke-width="2.1" /><path d="M743.8 112.0 L745.7 228.1" fill="none" stroke="#a83434" stroke-width="2.1" /><path d="M760.9 113.9 L761.8 226.3" fill="none" stroke="#a83434" stroke-width="2.1" /><path d="M778.9 116.0 L778.7 224.5" fill="none" stroke="#a83434" stroke-width="2.1" /><path d="M796.1 117.9 L794.9 222.7" fill="none" stroke="#a83434" stroke-width="2.1" /><path d="M813.2 119.9 L811.0 220.9" fill="none" stroke="#a83434" stroke-width="2.1" /><path d="M825.2 121.2 L822.3 219.7" fill="none" stroke="#a83434" stroke-width="2.1" /><path d="M675.4 221.8 L681.0 336.4" fill="none" stroke="#c03a3a" stroke-width="2.3" /><path d="M682.7 222.4 L688.0 339.9" fill="none" stroke="#c03a3a" stroke-width="2.3" /><path d="M692.0 223.3 L696.8 344.3" fill="none" stroke="#c03a3a" stroke-width="2.3" /><path d="M701.2 224.1 L705.6 348.8" fill="none" stroke="#c03a3a" stroke-width="2.3" /><path d="M711.5 225.0 L715.5 353.7" fill="none" stroke="#c03a3a" stroke-width="2.3" /><path d="M722.2 226.0 L725.6 358.8" fill="none" stroke="#c03a3a" stroke-width="2.3" /><path d="M732.9 226.9 L735.8 363.9" fill="none" stroke="#c03a3a" stroke-width="2.3" /><path d="M745.7 228.1 L748.0 370.0" fill="none" stroke="#c03a3a" stroke-width="2.3" /><path d="M761.8 226.3 L762.9 363.7" fill="none" stroke="#c03a3a" stroke-width="2.3" /><path d="M778.7 224.5 L778.5 357.1" fill="none" stroke="#c03a3a" stroke-width="2.3" /><path d="M794.9 222.7 L793.4 350.8" fill="none" stroke="#c03a3a" stroke-width="2.3" /><path d="M811.0 220.9 L808.3 344.5" fill="none" stroke="#c03a3a" stroke-width="2.3" /><path d="M822.3 219.7 L818.8 340.1" fill="none" stroke="#c03a3a" stroke-width="2.3" /><path d="M669.4 128.1 L743.8 112.0 L830.0 121.6" fill="none" stroke="#888888" stroke-width="2.7" /><path d="M669.7 133.8 L743.9 119.0 L829.8 127.5" fill="none" stroke="#888888" stroke-width="2.7" /><path d="M670.0 139.4 L744.0 126.0 L829.6 133.4" fill="none" stroke="#888888" stroke-width="2.7" /><path d="M670.2 145.0 L744.1 133.0 L829.4 139.2" fill="none" stroke="#888888" stroke-width="2.7" /><path d="M670.5 150.6 L744.2 139.9 L829.2 145.0" fill="none" stroke="#888888" stroke-width="2.7" /><path d="M670.8 156.1 L744.3 146.8 L829.1 150.8" fill="none" stroke="#888888" stroke-width="2.7" /><path d="M671.1 161.6 L744.4 153.6 L828.9 156.6" fill="none" stroke="#888888" stroke-width="2.7" /><path d="M671.3 167.1 L744.5 160.4 L828.7 162.3" fill="none" stroke="#8a8a8a" stroke-width="2.2" /><path d="M671.6 172.6 L744.7 167.2 L828.5 168.0" fill="none" stroke="#8a8a8a" stroke-width="2.2" /><path d="M671.9 178.0 L744.8 173.9 L828.3 173.6" fill="none" stroke="#8a8a8a" stroke-width="2.2" /><path d="M672.1 183.4 L744.9 180.6 L828.1 179.3" fill="none" stroke="#8a8a8a" stroke-width="2.2" /><path d="M672.4 188.7 L745.0 187.3 L828.0 184.9" fill="none" stroke="#8a8a8a" stroke-width="2.2" /><path d="M672.7 194.1 L745.1 193.9 L827.8 190.4" fill="none" stroke="#787878" stroke-width="1.7" /><path d="M672.9 199.4 L745.2 200.5 L827.6 196.0" fill="none" stroke="#787878" stroke-width="1.7" /><path d="M673.2 204.7 L745.3 207.1 L827.4 201.5" fill="none" stroke="#787878" stroke-width="1.7" /><path d="M673.5 209.9 L745.4 213.6 L827.2 207.0" fill="none" stroke="#787878" stroke-width="1.7" /><path d="M673.7 215.1 L745.5 220.0 L827.1 212.4" fill="none" stroke="#787878" stroke-width="1.7" /><path d="M674.0 220.3 L745.6 226.5 L826.9 217.8" fill="none" stroke="#787878" stroke-width="1.7" /><path d="M674.2 225.5 L745.7 232.9 L826.7 223.2" fill="none" stroke="#666666" stroke-width="1.45" /><path d="M674.5 230.6 L745.8 239.3 L826.5 228.5" fill="none" stroke="#666666" stroke-width="1.45" /><path d="M674.7 235.7 L746.0 245.6 L826.4 233.9" fill="none" stroke="#666666" stroke-width="1.45" /><path d="M675.0 240.8 L746.1 251.9 L826.2 239.1" fill="none" stroke="#666666" stroke-width="1.45" /><path d="M675.2 245.8 L746.2 258.1 L826.0 244.4" fill="none" stroke="#666666" stroke-width="1.45" /><path d="M675.5 250.8 L746.3 264.4 L825.9 249.6" fill="none" stroke="#666666" stroke-width="1.45" /><path d="M675.7 255.8 L746.4 270.5 L825.7 254.8" fill="none" stroke="#666666" stroke-width="1.45" /><path d="M676.0 260.7 L746.5 276.7 L825.5 260.0" fill="none" stroke="#666666" stroke-width="1.45" /><path d="M676.2 265.7 L746.6 282.8 L825.4 265.1" fill="none" stroke="#666666" stroke-width="1.45" /><path d="M676.5 270.6 L746.7 288.9 L825.2 270.2" fill="none" stroke="#666666" stroke-width="1.45" /><path d="M676.7 275.4 L746.8 294.9 L825.0 275.3" fill="none" stroke="#666666" stroke-width="1.45" /><path d="M676.9 280.2 L746.9 300.9 L824.9 280.3" fill="none" stroke="#666666" stroke-width="1.45" /><path d="M677.2 285.0 L747.0 306.9 L824.7 285.3" fill="none" stroke="#666666" stroke-width="1.45" /><path d="M677.4 289.8 L747.1 312.8 L824.6 290.3" fill="none" stroke="#666666" stroke-width="1.45" /><path d="M677.7 294.6 L747.2 318.7 L824.4 295.3" fill="none" stroke="#666666" stroke-width="1.45" /><path d="M677.9 299.3 L747.3 324.5 L824.2 300.2" fill="none" stroke="#666666" stroke-width="1.45" /><path d="M678.1 304.0 L747.3 330.3 L824.1 305.1" fill="none" stroke="#666666" stroke-width="1.45" /><path d="M678.3 308.6 L747.4 336.1 L823.9 309.9" fill="none" stroke="#666666" stroke-width="1.45" /><path d="M678.6 313.2 L747.5 341.9 L823.8 314.7" fill="none" stroke="#666666" stroke-width="1.45" /><path d="M678.8 317.8 L747.6 347.6 L823.6 319.5" fill="none" stroke="#666666" stroke-width="1.45" /><path d="M679.0 322.4 L747.7 353.2 L823.5 324.3" fill="none" stroke="#666666" stroke-width="1.45" /><path d="M679.3 326.9 L747.8 358.9 L823.3 329.0" fill="none" stroke="#666666" stroke-width="1.45" /><path d="M679.5 331.4 L747.9 364.4 L823.2 333.7" fill="none" stroke="#666666" stroke-width="1.45" /><path d="M679.7 335.9 L748.0 370.0 L823.0 338.4" fill="none" stroke="#666666" stroke-width="1.45" /><polygon points="669.9,128.2 743.8,112.0 829.5,121.7 828.5,124.2 743.8,115.5 670.9,130.7" fill="#8a8a8a"/><path d="M785.3 110.0 L785.3 121.0" fill="none" stroke="#b83a3a" stroke-width="2.0" /><path d="M798.0 107.5 L798.0 121.0" fill="none" stroke="#b83a3a" stroke-width="2.0" /><path d="M811.6 105.0 L811.6 121.5" fill="none" stroke="#b83a3a" stroke-width="2.0" /><path d="M822.2 106.5 L822.2 122.0" fill="none" stroke="#b83a3a" stroke-width="2.0" /><polygon points="656.9,340.9 679.8,336.4 751.4,383.7 727.5,389.7 667.8,362.8" fill="#3a3c3a" stroke="#2c2e2c" stroke-width="0.5" stroke-linejoin="round"/><polygon points="711.6,369.8 727.5,365.8 751.4,383.7 727.5,389.7" fill="#8e8e8e" stroke="#555" stroke-width="0.5" stroke-linejoin="round"/><polygon points="656.9,340.9 667.8,362.8 727.5,389.7 727.5,392.0 665.9,364.2 655.9,343.9" fill="#6b6e62"/><polygon points="667.8,362.8 727.5,389.7 729.5,416.5 667.8,384.1" fill="#5a5e4d" stroke="#3e4136" stroke-width="0.6" stroke-linejoin="round"/><path d="M677.8 367.3 L678.1 389.5" fill="none" stroke="#43463a" stroke-width="0.7" /><path d="M687.7 371.8 L688.4 394.9" fill="none" stroke="#43463a" stroke-width="0.7" /><path d="M697.7 376.2 L698.7 400.3" fill="none" stroke="#43463a" stroke-width="0.7" /><path d="M707.6 380.7 L708.9 405.7" fill="none" stroke="#43463a" stroke-width="0.7" /><path d="M717.6 385.2 L719.2 411.1" fill="none" stroke="#43463a" stroke-width="0.7" /><path d="M667.8 368.2 L728.5 396.4" fill="none" stroke="#4a4d40" stroke-width="0.6" /><path d="M667.8 373.5 L728.5 403.2" fill="none" stroke="#4a4d40" stroke-width="0.6" /><path d="M667.8 378.9 L728.5 409.9" fill="none" stroke="#4a4d40" stroke-width="0.6" /><polygon points="727.5,389.7 751.4,383.7 751.4,408.5 729.5,416.5" fill="#55584a" stroke="#3a3c34" stroke-width="0.5" stroke-linejoin="round"/><polygon points="729.9,394.0 750.6,388.1 750.6,390.1 729.9,396.4" fill="#9a9a98"/><polygon points="729.9,399.6 750.6,393.2 750.6,395.2 729.9,402.0" fill="#9a9a98"/><polygon points="729.9,405.2 750.6,398.4 750.6,400.4 729.9,407.6" fill="#9a9a98"/><polygon points="729.9,410.7 750.6,403.6 750.6,405.6 729.9,413.1" fill="#9a9a98"/><polygon points="646.4,351.9 659.9,349.5 667.8,355.9 658.9,359.8" fill="#8a8c86" stroke="#555" stroke-width="0.5" stroke-linejoin="round"/><polygon points="646.4,352.3 658.9,359.8 659.5,366.2 646.8,358.2" fill="#5a5e4d" stroke="#3e4136" stroke-width="0.5" stroke-linejoin="round"/><polygon points="658.9,359.8 667.8,356.2 667.8,363.8 659.5,366.2" fill="#4c4f42"/><polygon points="669.8,386.7 672.6,387.9 672.6,389.9 669.8,388.7" fill="#55584a"/><polygon points="685.7,395.6 688.5,396.8 688.5,398.8 685.7,397.6" fill="#55584a"/><polygon points="707.6,409.5 710.4,410.7 710.4,412.7 707.6,411.5" fill="#55584a"/><polygon points="719.5,415.5 722.3,416.7 722.3,418.7 719.5,417.5" fill="#55584a"/><polygon points="747.0,400.0 760.0,405.0 777.0,432.0 771.0,428.0 754.0,413.0 746.0,410.0" fill="#868686"/><polygon points="759.9,406.6 797.7,392.0 823.5,404.0 821.9,414.5 775.8,431.8 763.9,420.5" fill="#8a8a8a" stroke="#4a4a4a" stroke-width="0.5" stroke-linejoin="round"/><polygon points="775.8,431.8 821.9,414.5 822.5,418.5 776.8,437.4" fill="#c8c8c8" stroke="#666" stroke-width="0.4" stroke-linejoin="round"/><polygon points="782.8,413.5 805.6,405.6 818.5,410.5 793.7,420.5" fill="#a0a0a0" stroke="#555" stroke-width="0.4" stroke-linejoin="round"/><polygon points="760.9,417.5 762.9,417.5 762.9,409.5 760.9,409.5" fill="#55584a"/><polygon points="770.8,413.5 772.8,413.5 772.8,405.6 770.8,405.6" fill="#55584a"/><polygon points="781.8,416.5 783.7,416.5 783.7,408.5 781.8,408.5" fill="#55584a"/><polygon points="791.7,424.5 793.7,424.5 793.7,416.5 791.7,416.5" fill="#55584a"/><polygon points="803.6,417.5 805.6,417.5 805.6,409.5 803.6,409.5" fill="#55584a"/><polygon points="815.6,411.5 817.6,411.5 817.6,403.6 815.6,403.6" fill="#55584a"/><polygon points="760.9,423.5 762.9,423.5 762.9,415.5 760.9,415.5" fill="#55584a"/><polygon points="804.6,421.5 806.6,421.5 806.6,413.5 804.6,413.5" fill="#55584a"/><polygon points="816.6,415.5 818.5,415.5 818.5,407.6 816.6,407.6" fill="#55584a"/><polygon points="703.6,431.4 734.5,418.1 755.3,412.5 772.2,426.4 734.5,454.9" fill="#808080" stroke="#4a4a4a" stroke-width="0.6" stroke-linejoin="round"/><polygon points="703.6,431.4 734.5,454.9 734.5,465.6 704.0,442.5" fill="#5a5e4d" stroke="#3e4136" stroke-width="0.6" stroke-linejoin="round"/><polygon points="734.5,454.9 772.2,426.4 772.8,434.4 735.0,465.6" fill="#8e908c" stroke="#4a4a4a" stroke-width="0.5" stroke-linejoin="round"/><polygon points="736.4,457.3 771.2,430.4 771.6,433.4 736.8,462.8" fill="#e0e0e0"/><polygon points="715.4,433.4 717.7,433.4 717.7,428.2 715.4,428.2" fill="#55584a"/><polygon points="714.4,434.4 718.7,434.4 718.7,432.8 714.4,432.8" fill="#5f6255"/><polygon points="730.3,427.4 732.7,427.4 732.7,422.3 730.3,422.3" fill="#55584a"/><polygon points="729.3,428.4 733.7,428.4 733.7,426.8 729.3,426.8" fill="#5f6255"/><polygon points="741.2,420.5 743.6,420.5 743.6,415.3 741.2,415.3" fill="#55584a"/><polygon points="740.2,421.5 744.6,421.5 744.6,419.9 740.2,419.9" fill="#5f6255"/><polygon points="726.3,440.4 728.7,440.4 728.7,435.2 726.3,435.2" fill="#55584a"/><polygon points="725.3,441.4 729.7,441.4 729.7,439.8 725.3,439.8" fill="#5f6255"/><polygon points="740.2,433.4 742.6,433.4 742.6,428.2 740.2,428.2" fill="#55584a"/><polygon points="739.2,434.4 743.6,434.4 743.6,432.8 739.2,432.8" fill="#5f6255"/><polygon points="755.1,425.4 757.5,425.4 757.5,420.3 755.1,420.3" fill="#55584a"/><polygon points="754.1,426.4 758.5,426.4 758.5,424.8 754.1,424.8" fill="#5f6255"/><polygon points="737.2,447.3 739.6,447.3 739.6,442.1 737.2,442.1" fill="#55584a"/><polygon points="736.2,448.3 740.6,448.3 740.6,446.7 736.2,446.7" fill="#5f6255"/><polygon points="752.1,438.4 754.5,438.4 754.5,433.2 752.1,433.2" fill="#55584a"/><polygon points="751.2,439.4 755.5,439.4 755.5,437.8 751.2,437.8" fill="#5f6255"/><polygon points="766.1,429.4 768.5,429.4 768.5,424.3 766.1,424.3" fill="#55584a"/><polygon points="765.1,430.4 769.4,430.4 769.4,428.8 765.1,428.8" fill="#5f6255"/><polygon points="796.7,366.2 820.5,340.9 871.6,359.4 825.5,378.3" fill="#383a38" stroke="#2a2c2a" stroke-width="0.5" stroke-linejoin="round"/><path d="M808.6 353.9 L848.4 368.8" fill="none" stroke="#555" stroke-width="0.5" /><path d="M821.5 359.8 L833.5 349.9" fill="none" stroke="#555" stroke-width="0.5" /><path d="M835.4 346.9 L857.3 364.2" fill="none" stroke="#4a4a4a" stroke-width="0.4" /><polygon points="818.1,368.8 819.9,367.8 821.7,368.8 819.9,369.8" fill="#8a8a8a"/><polygon points="833.3,363.4 835.0,362.4 836.8,363.4 835.0,364.4" fill="#8a8a8a"/><polygon points="830.7,353.5 832.5,352.5 834.3,353.5 832.5,354.5" fill="#8a8a8a"/><polygon points="845.6,359.4 847.4,358.4 849.2,359.4 847.4,360.4" fill="#8a8a8a"/><polygon points="796.7,366.2 825.5,378.3 826.5,409.5 799.7,392.0" fill="#6a6c68"/><polygon points="797.7,369.0 825.5,381.3 825.5,383.3 797.7,370.8" fill="#b0b0b0"/><polygon points="797.7,374.1 825.5,387.3 825.5,389.3 797.7,375.9" fill="#b0b0b0"/><polygon points="797.7,379.3 825.5,393.2 825.5,395.2 797.7,381.1" fill="#b0b0b0"/><polygon points="797.7,384.5 825.5,399.2 825.5,401.2 797.7,386.3" fill="#b0b0b0"/><polygon points="797.7,389.7 825.5,405.2 825.5,407.2 797.7,391.4" fill="#b0b0b0"/><polygon points="825.5,378.3 871.6,359.4 870.2,391.6 826.5,411.5" fill="#6e7068"/><polygon points="826.7,382.1 870.8,363.0 870.8,365.8 826.7,385.3" fill="#d8d8d8"/><polygon points="826.7,388.1 870.8,368.6 870.8,371.4 826.7,391.2" fill="#d8d8d8"/><polygon points="826.7,394.0 870.8,374.1 870.8,376.9 826.7,397.2" fill="#d8d8d8"/><polygon points="826.3,396.6 870.6,378.7 870.2,392.0 826.7,411.9" fill="#54584a" stroke="#3a3c34" stroke-width="0.5" stroke-linejoin="round"/><path d="M826.9 378.3 L826.9 410.5" fill="none" stroke="#4a4d42" stroke-width="2.0" /><path d="M837.4 373.8 L837.4 405.9" fill="none" stroke="#4a4d42" stroke-width="2.0" /><path d="M846.4 370.0 L846.4 402.0" fill="none" stroke="#4a4d42" stroke-width="2.0" /><path d="M855.3 366.2 L855.3 398.1" fill="none" stroke="#4a4d42" stroke-width="2.0" /><path d="M863.3 362.8 L863.3 394.7" fill="none" stroke="#4a4d42" stroke-width="2.0" /><path d="M870.2 359.8 L870.2 391.6" fill="none" stroke="#4a4d42" stroke-width="2.0" /><polygon points="1097.1,102.4 1103.1,97.9 1119.5,97.9 1121.0,91.3 1134.4,90.4 1176.2,94.3 1175.3,139.7 1098.6,138.2" fill="#1cc840" stroke="#087f24" stroke-width="0.5" stroke-linejoin="round"/><polygon points="1097.1,102.4 1103.1,97.9 1119.5,97.9 1119.5,138.2 1098.6,138.2" fill="#2bd44e"/><path d="M1124.9 91.9 L1124.9 139.1" fill="none" stroke="#34dc58" stroke-width="1.0" /><path d="M1129.9 91.9 L1129.9 139.1" fill="none" stroke="#087f24" stroke-width="1.0" /><path d="M1135.0 91.9 L1135.0 139.1" fill="none" stroke="#087f24" stroke-width="1.0" /><path d="M1141.0 91.9 L1141.0 139.1" fill="none" stroke="#34dc58" stroke-width="1.0" /><path d="M1146.9 91.9 L1146.9 139.1" fill="none" stroke="#087f24" stroke-width="1.0" /><path d="M1152.3 91.9 L1152.3 139.1" fill="none" stroke="#087f24" stroke-width="1.0" /><path d="M1158.3 91.9 L1158.3 139.1" fill="none" stroke="#087f24" stroke-width="1.0" /><path d="M1164.8 91.9 L1164.8 139.1" fill="none" stroke="#087f24" stroke-width="1.0" /><path d="M1170.2 91.9 L1170.2 139.1" fill="none" stroke="#087f24" stroke-width="1.0" /><path d="M1104.6 98.5 L1104.6 138.5" fill="none" stroke="#0c9a2c" stroke-width="0.6" /><path d="M1110.5 98.5 L1110.5 138.5" fill="none" stroke="#0c9a2c" stroke-width="0.6" /><path d="M1115.9 98.5 L1115.9 138.5" fill="none" stroke="#0c9a2c" stroke-width="0.6" /><polygon points="1056.2,163.0 1056.2,162.5 1056.2,162.0 1056.2,161.5 1056.2,161.0 1056.3,160.5 1056.3,160.0 1056.3,159.5 1056.3,159.0 1056.3,158.5 1056.4,158.0 1056.4,157.5 1056.4,157.0 1056.4,156.5 1056.4,156.0 1056.4,155.5 1056.5,155.0 1056.5,154.5 1056.5,154.0 1056.5,153.5 1056.5,153.0 1056.5,152.5 1056.6,152.0 1056.6,151.5 1056.6,151.0 1102.5,139.2 1218.7,143.5 1218.7,144.0 1218.6,144.6 1218.6,145.1 1218.5,145.7 1218.5,146.2 1218.4,146.7 1218.4,147.3 1218.3,147.8 1218.3,148.4 1218.2,148.9 1218.2,149.5 1218.1,150.0 1218.1,150.6 1218.0,151.1 1218.0,151.7 1217.9,152.2 1217.9,152.8 1217.8,153.3 1217.8,153.9 1217.7,154.4 1217.7,155.0 1217.6,155.5 1217.6,156.1 1217.5,156.6 1101.9,153.1" fill="#0d8f2c"/><polygon points="1070.9,256.7 1071.4,252.5 1071.9,248.2 1072.3,244.0 1072.8,239.8 1073.3,235.5 1073.8,231.2 1074.1,227.0 1074.4,222.7 1074.8,218.4 1075.1,214.1 1075.5,209.8 1075.8,205.5 1076.2,201.2 1076.5,196.9 1076.8,192.6 1077.2,188.3 1077.5,184.0 1077.9,179.6 1078.2,175.3 1078.5,171.0 1078.9,166.6 1079.2,162.3 1079.6,157.9 1079.9,153.6 1102.1,148.5 1173.9,150.8 1174.0,155.3 1174.1,159.8 1174.2,164.3 1174.3,168.8 1174.4,173.2 1174.5,177.7 1174.6,182.2 1174.7,186.7 1174.8,191.2 1174.9,195.6 1175.9,200.1 1177.9,204.6 1179.9,209.1 1182.0,213.5 1184.0,218.0 1186.0,222.4 1188.0,226.8 1190.0,231.3 1192.0,235.7 1194.1,240.1 1195.4,244.5 1196.2,248.9 1197.0,253.2 1197.7,257.6 1097.3,259.7" fill="#13a035"/><polygon points="1051.5,351.2 1051.9,346.7 1052.3,342.3 1052.7,337.9 1053.0,333.5 1053.4,329.0 1053.8,324.6 1054.2,320.1 1054.6,315.6 1055.1,311.2 1057.1,307.2 1059.1,303.2 1061.0,299.0 1063.0,294.9 1064.2,290.4 1065.0,285.9 1065.8,281.3 1066.6,276.7 1067.4,272.1 1068.3,267.5 1069.1,262.8 1069.9,258.1 1070.7,253.5 1071.5,248.7 1072.3,244.0 1097.9,245.8 1195.9,244.5 1196.6,249.4 1197.3,254.3 1197.9,259.3 1198.6,264.2 1199.3,269.1 1200.0,274.0 1199.9,279.0 1199.5,283.9 1199.1,288.9 1198.8,293.8 1198.4,298.8 1198.0,303.7 1197.6,308.7 1197.3,313.6 1196.9,318.6 1196.5,323.5 1196.1,328.4 1195.8,333.4 1195.4,338.3 1195.0,343.3 1194.6,348.2 1194.3,353.2 1193.9,358.1 1193.5,363.1 1092.5,371.0" fill="#22e44a"/><polygon points="1070.7,260.9 1070.7,260.2 1070.7,259.5 1070.8,258.8 1070.8,258.1 1070.8,257.4 1070.9,256.7 1070.9,256.0 1070.9,255.3 1071.0,254.5 1071.0,253.8 1071.0,253.1 1071.0,252.4 1071.1,251.7 1071.1,251.0 1071.1,250.3 1071.2,249.6 1071.2,248.9 1071.2,248.2 1071.3,247.5 1071.3,246.8 1071.3,246.1 1071.4,245.3 1071.4,244.6 1071.4,243.9 1097.9,245.8 1197.7,244.4 1197.7,245.2 1197.6,245.9 1197.6,246.6 1197.5,247.4 1197.5,248.1 1197.4,248.8 1197.4,249.6 1197.3,250.3 1197.3,251.0 1197.2,251.8 1197.2,252.5 1197.1,253.2 1197.0,254.0 1197.0,254.7 1196.9,255.4 1196.9,256.2 1196.8,256.9 1196.8,257.7 1196.7,258.4 1196.7,259.1 1196.6,259.9 1196.6,260.6 1196.5,261.3 1196.5,262.1 1097.1,264.4" fill="#1abf40"/><polygon points="1174.0,141.8 1219.7,143.5 1173.5,147.3" fill="#0e8f2e"/><polygon points="1080.5,144.9 1055.6,151.3 1080.3,150.1" fill="#0e8f2e"/><polygon points="1174.1,147.3 1219.2,148.8 1173.6,152.8" fill="#0e8f2e"/><polygon points="1080.1,150.2 1055.4,156.1 1079.9,155.5" fill="#0e8f2e"/><polygon points="1174.2,152.8 1218.8,154.2 1173.8,158.2" fill="#0e8f2e"/><polygon points="1079.6,155.5 1055.3,161.0 1079.5,160.8" fill="#0e8f2e"/><polygon points="1174.3,158.3 1218.3,159.5 1173.9,163.7" fill="#0e8f2e"/><polygon points="1079.2,160.8 1055.1,165.8 1079.1,166.1" fill="#0e8f2e"/><polygon points="1174.5,163.7 1217.8,164.9 1174.0,169.2" fill="#0e8f2e"/><polygon points="1078.8,166.1 1054.9,170.7 1078.6,171.4" fill="#0e8f2e"/><polygon points="1174.6,169.2 1217.4,170.2 1174.1,174.7" fill="#0e8f2e"/><polygon points="1078.4,171.4 1054.7,175.5 1078.2,176.7" fill="#0e8f2e"/><polygon points="1174.7,174.7 1216.9,175.5 1174.2,180.1" fill="#0e8f2e"/><polygon points="1078.0,176.7 1054.6,180.3 1077.8,181.9" fill="#0e8f2e"/><polygon points="1174.8,180.1 1216.4,180.9 1174.3,185.6" fill="#0e8f2e"/><polygon points="1077.6,182.0 1054.4,185.2 1077.4,187.2" fill="#0e8f2e"/><polygon points="1174.9,185.6 1216.0,186.2 1174.5,191.0" fill="#0e8f2e"/><polygon points="1077.1,187.2 1054.2,190.0 1077.0,192.5" fill="#0e8f2e"/><polygon points="1175.0,191.0 1215.5,191.6 1174.6,196.5" fill="#0e8f2e"/><polygon points="1076.7,192.5 1054.0,194.9 1076.6,197.7" fill="#0e8f2e"/><polygon points="1175.7,196.5 1215.0,196.9 1175.3,202.0" fill="#0e8f2e"/><polygon points="1076.3,197.8 1053.9,199.7 1076.1,203.0" fill="#0e8f2e"/><polygon points="1178.2,202.0 1214.5,202.3 1177.7,207.4" fill="#0e8f2e"/><polygon points="1075.9,203.0 1053.7,204.5 1075.7,208.2" fill="#0e8f2e"/><polygon points="1180.7,207.4 1214.1,207.6 1180.2,212.9" fill="#0e8f2e"/><polygon points="1075.5,208.3 1053.5,209.4 1075.3,213.5" fill="#0e8f2e"/><polygon points="1183.1,212.9 1213.6,212.9 1182.7,218.3" fill="#0e8f2e"/><polygon points="1075.1,213.5 1053.3,214.2 1074.9,218.7" fill="#0e8f2e"/><polygon points="1185.1,223.7 1212.7,223.6 1185.6,218.3" fill="#22e44a"/><polygon points="1074.5,223.9 1053.0,223.9 1074.6,218.7" fill="#22e44a"/><polygon points="1187.6,229.1 1212.2,229.0 1188.0,223.7" fill="#22e44a"/><polygon points="1074.0,229.2 1052.8,228.7 1074.2,223.9" fill="#22e44a"/><polygon points="1190.0,234.5 1211.7,234.3 1190.5,229.1" fill="#22e44a"/><polygon points="1073.6,234.4 1052.7,233.6 1073.8,229.2" fill="#22e44a"/><polygon points="1192.5,239.9 1211.3,239.6 1193.0,234.5" fill="#22e44a"/><polygon points="1072.9,239.6 1052.5,238.4 1073.1,234.3" fill="#22e44a"/><polygon points="1194.9,245.2 1210.8,245.0 1195.4,239.8" fill="#22e44a"/><polygon points="1072.3,244.7 1052.3,243.2 1072.5,239.5" fill="#22e44a"/><polygon points="1196.4,250.6 1210.3,250.3 1196.9,245.2" fill="#22e44a"/><polygon points="1071.6,249.9 1052.1,248.1 1071.8,244.7" fill="#22e44a"/><polygon points="1197.9,255.9 1209.9,255.7 1198.3,250.5" fill="#22e44a"/><polygon points="1071.0,255.0 1052.0,252.9 1071.1,249.8" fill="#22e44a"/><polygon points="1198.4,261.3 1209.4,261.0 1198.8,255.9" fill="#22e44a"/><polygon points="1070.1,260.1 1051.8,257.8 1070.2,254.9" fill="#22e44a"/><polygon points="1198.9,266.6 1208.9,266.4 1199.3,261.2" fill="#22e44a"/><polygon points="1069.2,265.2 1051.6,262.6 1069.3,260.0" fill="#22e44a"/><polygon points="1199.4,272.0 1208.5,271.7 1199.9,266.6" fill="#22e44a"/><polygon points="1068.2,270.2 1051.4,267.4 1068.4,265.1" fill="#22e44a"/><polygon points="1199.9,277.3 1208.0,277.0 1200.4,271.9" fill="#22e44a"/><polygon points="1067.3,275.2 1051.3,272.3 1067.5,270.1" fill="#22e44a"/><polygon points="1199.6,282.7 1207.5,282.4 1200.0,277.3" fill="#22e44a"/><polygon points="1066.4,280.2 1051.1,277.1 1066.6,275.1" fill="#22e44a"/><polygon points="1199.2,288.0 1207.1,287.7 1199.6,282.6" fill="#22e44a"/><polygon points="1065.5,285.2 1050.9,282.0 1065.7,280.1" fill="#22e44a"/><polygon points="1198.8,293.4 1206.6,293.1 1199.2,288.0" fill="#22e44a"/><polygon points="1064.6,290.1 1050.8,286.8 1064.8,285.0" fill="#22e44a"/><polygon points="1198.4,298.7 1206.1,298.4 1198.8,293.4" fill="#22e44a"/><polygon points="1063.7,295.0 1050.6,291.6 1063.9,289.9" fill="#22e44a"/><polygon points="1198.0,304.1 1205.7,303.7 1198.4,298.7" fill="#22e44a"/><polygon points="1061.8,299.6 1050.4,296.5 1062.0,294.6" fill="#22e44a"/><polygon points="1197.5,309.5 1205.2,309.1 1198.0,304.1" fill="#22e44a"/><polygon points="1059.7,304.1 1050.2,301.3 1059.9,299.1" fill="#22e44a"/><polygon points="1197.1,314.8 1204.7,314.4 1197.6,309.5" fill="#22e44a"/><polygon points="1057.6,308.5 1050.1,306.1 1057.8,303.5" fill="#22e44a"/><polygon points="1196.7,320.2 1204.2,319.8 1197.2,314.8" fill="#22e44a"/><polygon points="1055.5,312.8 1049.9,311.0 1055.6,307.9" fill="#22e44a"/><polygon points="1196.3,325.5 1203.8,325.1 1196.8,320.2" fill="#22e44a"/><polygon points="1054.5,317.5 1049.7,315.8 1054.7,312.6" fill="#22e44a"/><polygon points="1195.9,330.9 1203.3,330.5 1196.4,325.5" fill="#22e44a"/><polygon points="1054.1,322.4 1049.5,320.7 1054.3,317.4" fill="#22e44a"/><polygon points="1195.5,336.3 1202.8,335.8 1196.0,330.9" fill="#22e44a"/><polygon points="1053.7,327.2 1049.4,325.5 1053.9,322.3" fill="#22e44a"/><polygon points="1195.1,341.6 1202.4,341.1 1195.6,336.3" fill="#22e44a"/><polygon points="1053.3,332.0 1049.2,330.3 1053.5,327.1" fill="#22e44a"/><polygon points="1194.7,347.0 1201.9,346.5 1195.2,341.6" fill="#22e44a"/><polygon points="1194.3,352.3 1201.4,351.8 1194.8,347.0" fill="#22e44a"/><polygon points="1193.9,357.7 1201.0,357.2 1194.3,352.3" fill="#22e44a"/><polygon points="1193.5,363.1 1200.5,362.5 1193.9,357.7" fill="#22e44a"/><path d="M1055.6 151.3 L1048.5 349.7" fill="none" stroke="#0c9a2c" stroke-width="1.3" /><path d="M1065.0 148.9 L1057.3 354.0" fill="none" stroke="#0c9a2c" stroke-width="1.3" /><path d="M1074.4 146.5 L1066.1 358.2" fill="none" stroke="#0c9a2c" stroke-width="1.3" /><path d="M1083.7 144.0 L1074.9 362.5" fill="none" stroke="#0c9a2c" stroke-width="1.3" /><path d="M1093.1 141.6 L1083.7 366.7" fill="none" stroke="#0c9a2c" stroke-width="1.3" /><path d="M1102.5 139.2 L1092.5 371.0" fill="none" stroke="#0c9a2c" stroke-width="1.3" /><path d="M1102.5 139.2 L1092.5 371.0" fill="none" stroke="#0c9a2c" stroke-width="1.5" /><path d="M1117.2 139.7 L1106.0 369.9" fill="none" stroke="#0c9a2c" stroke-width="1.5" /><path d="M1131.8 140.3 L1119.5 368.9" fill="none" stroke="#0c9a2c" stroke-width="1.5" /><path d="M1146.5 140.8 L1133.0 367.8" fill="none" stroke="#0c9a2c" stroke-width="1.5" /><path d="M1161.1 141.3 L1146.5 366.8" fill="none" stroke="#0c9a2c" stroke-width="1.5" /><path d="M1175.8 141.9 L1160.0 365.7" fill="none" stroke="#0c9a2c" stroke-width="1.5" /><path d="M1190.4 142.4 L1173.5 364.6" fill="none" stroke="#0c9a2c" stroke-width="1.5" /><path d="M1205.0 143.0 L1187.0 363.6" fill="none" stroke="#0c9a2c" stroke-width="1.5" /><path d="M1219.7 143.5 L1200.5 362.5" fill="none" stroke="#0c9a2c" stroke-width="1.5" /><path d="M1053.8 151.3 L1102.5 139.2 L1221.5 143.5" fill="none" stroke="#0a8a2a" stroke-width="2.5" /><path d="M1053.6 156.1 L1102.3 144.9 L1221.0 148.8" fill="none" stroke="#0a8a2a" stroke-width="2.5" /><path d="M1053.5 161.0 L1102.0 150.5 L1220.6 154.2" fill="none" stroke="#0a8a2a" stroke-width="2.5" /><path d="M1053.3 165.8 L1101.8 156.2 L1220.1 159.5" fill="none" stroke="#0a8a2a" stroke-width="2.5" /><path d="M1053.1 170.7 L1101.5 161.8 L1219.6 164.9" fill="none" stroke="#0a8a2a" stroke-width="2.5" /><path d="M1052.9 175.5 L1101.3 167.5 L1219.2 170.2" fill="none" stroke="#0a8a2a" stroke-width="2.5" /><path d="M1052.8 180.3 L1101.0 173.1 L1218.7 175.5" fill="none" stroke="#0a8a2a" stroke-width="2.5" /><path d="M1052.6 185.2 L1100.8 178.8 L1218.2 180.9" fill="none" stroke="#0a8a2a" stroke-width="2.5" /><path d="M1052.4 190.0 L1100.5 184.4 L1217.8 186.2" fill="none" stroke="#0a8a2a" stroke-width="2.5" /><path d="M1052.2 194.9 L1100.3 190.1 L1217.3 191.6" fill="none" stroke="#0a8a2a" stroke-width="2.5" /><path d="M1052.1 199.7 L1100.1 195.7 L1216.8 196.9" fill="none" stroke="#0a8a2a" stroke-width="2.5" /><path d="M1051.9 204.5 L1099.8 201.4 L1216.3 202.3" fill="none" stroke="#0a8a2a" stroke-width="2.5" /><path d="M1051.7 209.4 L1099.6 207.0 L1215.9 207.6" fill="none" stroke="#0a8a2a" stroke-width="2.5" /><path d="M1051.5 214.2 L1099.3 212.7 L1215.4 212.9" fill="none" stroke="#0a8a2a" stroke-width="2.5" /><path d="M1051.4 219.0 L1099.1 218.4 L1214.9 218.3" fill="none" stroke="#0a8a2a" stroke-width="2.5" /><path d="M1051.2 223.9 L1098.8 224.0 L1214.5 223.6" fill="none" stroke="#0a8a2a" stroke-width="2.5" /><path d="M1051.0 228.7 L1098.6 229.7 L1214.0 229.0" fill="none" stroke="#0a8a2a" stroke-width="2.5" /><path d="M1050.9 233.6 L1098.4 235.3 L1213.5 234.3" fill="none" stroke="#0a8a2a" stroke-width="2.5" /><path d="M1050.7 238.4 L1098.1 241.0 L1213.1 239.6" fill="none" stroke="#0a8a2a" stroke-width="2.5" /><path d="M1050.5 243.2 L1097.9 246.6 L1212.6 245.0" fill="none" stroke="#0a8a2a" stroke-width="2.5" /><path d="M1050.3 248.1 L1097.6 252.3 L1212.1 250.3" fill="none" stroke="#0a8a2a" stroke-width="2.5" /><path d="M1050.2 252.9 L1097.4 257.9 L1211.7 255.7" fill="none" stroke="#0b9230" stroke-width="2.2" /><path d="M1050.0 257.8 L1097.1 263.6 L1211.2 261.0" fill="none" stroke="#0b9230" stroke-width="2.2" /><path d="M1049.8 262.6 L1096.9 269.2 L1210.7 266.4" fill="none" stroke="#0b9230" stroke-width="2.2" /><path d="M1049.6 267.4 L1096.6 274.9 L1210.3 271.7" fill="none" stroke="#0b9230" stroke-width="2.2" /><path d="M1049.5 272.3 L1096.4 280.5 L1209.8 277.0" fill="none" stroke="#0b9230" stroke-width="2.2" /><path d="M1049.3 277.1 L1096.2 286.2 L1209.3 282.4" fill="none" stroke="#0b9230" stroke-width="2.2" /><path d="M1049.1 282.0 L1095.9 291.8 L1208.9 287.7" fill="none" stroke="#0b9230" stroke-width="2.2" /><path d="M1049.0 286.8 L1095.7 297.5 L1208.4 293.1" fill="none" stroke="#0b9230" stroke-width="2.2" /><path d="M1048.8 291.6 L1095.4 303.2 L1207.9 298.4" fill="none" stroke="#0b9230" stroke-width="2.2" /><path d="M1048.6 296.5 L1095.2 308.8 L1207.5 303.7" fill="none" stroke="#0b9230" stroke-width="2.2" /><path d="M1048.4 301.3 L1094.9 314.5 L1207.0 309.1" fill="none" stroke="#0b9230" stroke-width="2.2" /><path d="M1048.3 306.1 L1094.7 320.1 L1206.5 314.4" fill="none" stroke="#0b9230" stroke-width="2.2" /><path d="M1048.1 311.0 L1094.5 325.8 L1206.0 319.8" fill="none" stroke="#0b9230" stroke-width="2.2" /><path d="M1047.9 315.8 L1094.2 331.4 L1205.6 325.1" fill="none" stroke="#0b9230" stroke-width="2.2" /><path d="M1047.7 320.7 L1094.0 337.1 L1205.1 330.5" fill="none" stroke="#0b9230" stroke-width="2.2" /><path d="M1047.6 325.5 L1093.7 342.7 L1204.6 335.8" fill="none" stroke="#0b9230" stroke-width="2.2" /><path d="M1047.4 330.3 L1093.5 348.4 L1204.2 341.1" fill="none" stroke="#0b9230" stroke-width="2.2" /><path d="M1047.2 335.2 L1093.2 354.0 L1203.7 346.5" fill="none" stroke="#0b9230" stroke-width="2.2" /><path d="M1047.0 340.0 L1093.0 359.7 L1203.2 351.8" fill="none" stroke="#0b9230" stroke-width="2.2" /><path d="M1046.9 344.9 L1092.7 365.3 L1202.8 357.2" fill="none" stroke="#0b9230" stroke-width="2.2" /><path d="M1046.7 349.7 L1092.5 371.0 L1202.3 362.5" fill="none" stroke="#0b9230" stroke-width="2.2" /><polygon points="1048.5,349.7 1092.5,371.0 1200.5,362.5 1196.0,384.0 1116.0,392.0 1117.0,414.0 1072.0,414.0 1049.0,374.0" fill="#1bc23f"/><path d="M1048.5 355.9 L1092.5 377.4 L1199.0 368.7" fill="none" stroke="#0c9a2c" stroke-width="1.4" /><path d="M1048.5 362.1 L1092.5 383.8 L1197.5 374.9" fill="none" stroke="#0c9a2c" stroke-width="1.4" /><path d="M1048.5 368.3 L1092.5 390.2 L1196.0 381.1" fill="none" stroke="#0c9a2c" stroke-width="1.4" /><path d="M1078.1 373.1 L1078.1 406.9" fill="none" stroke="#087f24" stroke-width="2.2" /><path d="M1092.5 371.8 L1092.5 409.6" fill="none" stroke="#087f24" stroke-width="2.2" /><path d="M1103.8 373.1 L1103.8 406.9" fill="none" stroke="#087f24" stroke-width="2.2" /><path d="M1124.0 371.8 L1124.0 388.0" fill="none" stroke="#087f24" stroke-width="2.2" /><path d="M1140.2 371.3 L1140.2 383.9" fill="none" stroke="#087f24" stroke-width="2.2" /><path d="M1157.8 369.6 L1157.8 379.9" fill="none" stroke="#087f24" stroke-width="2.2" /><path d="M1175.3 368.0 L1175.3 375.8" fill="none" stroke="#087f24" stroke-width="2.2" /><path d="M1192.3 366.4 L1192.3 373.1" fill="none" stroke="#087f24" stroke-width="2.2" /><path d="M1075.4 383.9 L1092.5 389.3 L1115.9 386.6" fill="none" stroke="#0c9a2c" stroke-width="1.2" /><path d="M1075.4 388.3 L1092.5 393.4 L1115.9 390.4" fill="none" stroke="#0c9a2c" stroke-width="1.2" /><path d="M1075.4 392.6 L1092.5 397.4 L1115.9 394.2" fill="none" stroke="#0c9a2c" stroke-width="1.2" /><path d="M1075.4 396.9 L1092.5 401.5 L1115.9 398.0" fill="none" stroke="#0c9a2c" stroke-width="1.2" /><path d="M1075.4 401.2 L1092.5 405.5 L1115.9 401.8" fill="none" stroke="#0c9a2c" stroke-width="1.2" /><path d="M1075.4 405.5 L1092.5 409.6 L1115.9 405.5" fill="none" stroke="#0c9a2c" stroke-width="1.2" /><polygon points="1022.8,344.8 1035.8,352.4 1025.5,361.0 1049.8,361.0 1051.1,350.7 1039.0,349.1" fill="#25dc4c" stroke="#0c9a2c" stroke-width="0.6" stroke-linejoin="round"/><polygon points="1043.0,409.0 1075.4,404.7 1115.9,409.6 1057.4,414.7" fill="#1fd046"/><polygon points="998.0,348.8 1022.8,344.3 1035.8,352.4 1025.5,361.0 1025.5,393.4 1012.0,389.3 998.0,381.2" fill="#22e44a" stroke="#0c9a2c" stroke-width="0.7" stroke-linejoin="round"/><polygon points="998.0,348.8 1022.8,344.3 1035.8,352.4 1010.6,358.3" fill="#2cec54" stroke="#0c9a2c" stroke-width="0.7" stroke-linejoin="round"/><path d="M998.0 355.3 L1010.6 364.8 L1025.5 364.8" fill="none" stroke="#0c9a2c" stroke-width="1.3" /><path d="M998.0 361.8 L1010.6 371.3 L1025.5 371.3" fill="none" stroke="#0c9a2c" stroke-width="1.3" /><path d="M998.0 368.3 L1010.6 377.7 L1025.5 377.7" fill="none" stroke="#0c9a2c" stroke-width="1.3" /><path d="M998.0 374.8 L1010.6 384.2 L1025.5 384.2" fill="none" stroke="#0c9a2c" stroke-width="1.3" /><path d="M1001.2 350.7 L1001.2 382.6" fill="none" stroke="#0c9a2c" stroke-width="1.2" /><path d="M1005.2 350.7 L1005.2 382.6" fill="none" stroke="#0c9a2c" stroke-width="1.2" /><path d="M1010.6 358.8 L1010.6 392.0" fill="none" stroke="#0c9a2c" stroke-width="1.2" /><path d="M1017.4 358.8 L1017.4 392.0" fill="none" stroke="#0c9a2c" stroke-width="1.2" /><path d="M1025.5 358.8 L1025.5 392.0" fill="none" stroke="#0c9a2c" stroke-width="1.2" /><polygon points="1025.5,361.0 1049.8,355.1 1075.4,369.1 1075.4,406.9 1066.0,409.6 1043.0,412.3 1025.5,396.1" fill="#22e44a" stroke="#0c9a2c" stroke-width="0.7" stroke-linejoin="round"/><polygon points="1025.5,361.0 1049.8,355.1 1074.6,381.2 1048.4,392.0" fill="#2cec54" stroke="#0c9a2c" stroke-width="0.7" stroke-linejoin="round"/><path d="M1025.5 368.0 L1048.4 396.4 L1075.4 388.5" fill="none" stroke="#0c9a2c" stroke-width="1.3" /><path d="M1025.5 375.0 L1048.4 400.7 L1075.4 393.1" fill="none" stroke="#0c9a2c" stroke-width="1.3" /><path d="M1025.5 382.1 L1048.4 405.0 L1075.4 397.7" fill="none" stroke="#0c9a2c" stroke-width="1.3" /><path d="M1025.5 389.1 L1048.4 409.3 L1075.4 402.3" fill="none" stroke="#0c9a2c" stroke-width="1.3" /><path d="M1029.5 364.2 L1029.5 398.8" fill="none" stroke="#0c9a2c" stroke-width="1.2" /><path d="M1036.3 373.1 L1036.3 405.5" fill="none" stroke="#0c9a2c" stroke-width="1.2" /><path d="M1043.0 383.9 L1043.0 412.3" fill="none" stroke="#0c9a2c" stroke-width="1.2" /><path d="M1048.4 392.0 L1048.4 412.3" fill="none" stroke="#0c9a2c" stroke-width="1.2" /><path d="M1057.9 389.3 L1057.9 410.9" fill="none" stroke="#0c9a2c" stroke-width="1.2" /><path d="M1066.0 386.6 L1066.0 409.6" fill="none" stroke="#0c9a2c" stroke-width="1.2" /><polygon points="999.8,381.2 1003.1,382.6 1003.1,386.6 999.8,385.0" fill="#14c23a"/><polygon points="1006.6,385.3 1009.8,386.6 1009.8,390.7 1006.6,389.1" fill="#14c23a"/><polygon points="1014.7,389.3 1017.9,390.7 1017.9,394.7 1014.7,393.1" fill="#14c23a"/><polygon points="1022.8,393.4 1026.0,394.7 1026.0,398.8 1022.8,397.2" fill="#14c23a"/><polygon points="1028.2,398.8 1031.4,400.1 1031.4,404.2 1028.2,402.6" fill="#14c23a"/><polygon points="1034.9,405.5 1038.2,406.9 1038.2,410.9 1034.9,409.3" fill="#14c23a"/><polygon points="1041.7,411.7 1044.9,413.1 1044.9,417.1 1041.7,415.5" fill="#14c23a"/><polygon points="1115.9,386.6 1147.0,379.4 1198.3,367.7 1245.5,388.0 1144.3,404.7" fill="#2aea52" stroke="#0c9a2c" stroke-width="0.7" stroke-linejoin="round"/><path d="M1136.2 382.1 L1168.6 398.8" fill="none" stroke="#0c9a2c" stroke-width="0.9" /><path d="M1157.8 377.2 L1192.9 394.7" fill="none" stroke="#0c9a2c" stroke-width="0.9" /><path d="M1179.4 372.3 L1217.2 391.2" fill="none" stroke="#0c9a2c" stroke-width="0.9" /><path d="M1198.3 367.7 L1238.8 387.5" fill="none" stroke="#0c9a2c" stroke-width="0.9" /><path d="M1130.8 395.6 L1222.6 377.7" fill="none" stroke="#0c9a2c" stroke-width="0.7" /><polygon points="1115.9,387.5 1144.3,404.7 1144.8,442.0 1117.3,411.7" fill="#14c23a" stroke="#0c9a2c" stroke-width="0.6" stroke-linejoin="round"/><polygon points="1116.7,390.7 1143.7,408.0 1143.7,411.2 1116.7,393.1" fill="#2aea52"/><polygon points="1116.7,395.6 1143.7,415.0 1143.7,418.2 1116.7,398.0" fill="#2aea52"/><polygon points="1116.7,400.4 1143.7,422.0 1143.7,425.2 1116.7,402.8" fill="#2aea52"/><polygon points="1116.7,405.3 1143.7,429.0 1143.7,432.3 1116.7,407.7" fill="#2aea52"/><polygon points="1116.7,410.1 1143.7,436.0 1143.7,439.3 1116.7,412.6" fill="#2aea52"/><polygon points="1144.3,404.7 1245.5,388.0 1241.5,425.8 1144.8,443.3" fill="#14c23a" stroke="#0c9a2c" stroke-width="0.6" stroke-linejoin="round"/><polygon points="1145.4,409.0 1244.7,391.8 1244.7,395.3 1145.4,412.8" fill="#2aea52"/><polygon points="1145.4,416.1 1244.7,398.8 1244.7,402.3 1145.4,419.8" fill="#2aea52"/><polygon points="1145.4,423.1 1244.7,405.8 1244.7,409.3 1145.4,426.9" fill="#2aea52"/><polygon points="1145.4,430.1 1244.7,412.8 1244.7,416.3 1145.4,433.9" fill="#2aea52"/><polygon points="1145.4,437.1 1244.7,419.8 1244.7,423.4 1145.4,440.9" fill="#2aea52"/><path d="M1144.3 404.7 L1144.3 443.3" fill="none" stroke="#0c9a2c" stroke-width="2.2" /><path d="M1160.5 402.0 L1160.5 440.5" fill="none" stroke="#0c9a2c" stroke-width="2.2" /><path d="M1176.7 399.3 L1176.7 437.7" fill="none" stroke="#0c9a2c" stroke-width="2.2" /><path d="M1192.9 396.6 L1192.9 434.8" fill="none" stroke="#0c9a2c" stroke-width="2.2" /><path d="M1207.7 394.2 L1207.7 432.3" fill="none" stroke="#0c9a2c" stroke-width="2.2" /><path d="M1222.6 391.7 L1222.6 429.7" fill="none" stroke="#0c9a2c" stroke-width="2.2" /><path d="M1236.1 389.4 L1236.1 427.3" fill="none" stroke="#0c9a2c" stroke-width="2.2" /><path d="M1244.7 388.0 L1244.7 425.8" fill="none" stroke="#0c9a2c" stroke-width="2.2" /><polygon points="1144.8,442.3 1149.7,442.3 1149.7,446.4 1144.8,446.4" fill="#14c23a"/><polygon points="1159.7,439.7 1164.5,439.7 1164.5,443.8 1159.7,443.8" fill="#14c23a"/><polygon points="1175.9,436.9 1180.7,436.9 1180.7,440.9 1175.9,440.9" fill="#14c23a"/><polygon points="1192.1,434.1 1196.9,434.1 1196.9,438.1 1192.1,438.1" fill="#14c23a"/><polygon points="1206.9,431.5 1211.8,431.5 1211.8,435.5 1206.9,435.5" fill="#14c23a"/><polygon points="1221.8,428.9 1226.6,428.9 1226.6,432.9 1221.8,432.9" fill="#14c23a"/><polygon points="1235.3,426.5 1240.1,426.5 1240.1,430.6 1235.3,430.6" fill="#14c23a"/><polygon points="1044.4,405.5 1057.4,414.2 1078.1,436.0 1079.5,454.1 1044.9,420.9" fill="#18c83e" stroke="#0c9a2c" stroke-width="0.7" stroke-linejoin="round"/><polygon points="1078.1,436.0 1117.3,431.7 1118.6,447.4 1079.5,454.1" fill="#1fd646" stroke="#0c9a2c" stroke-width="0.7" stroke-linejoin="round"/><path d="M1098.4 433.9 L1099.5 450.6" fill="none" stroke="#0c9a2c" stroke-width="0.8" /><path d="M1061.9 419.0 L1062.8 437.9" fill="none" stroke="#0c9a2c" stroke-width="0.8" /><polygon points="1057.4,414.2 1114.6,410.1 1137.5,428.5 1117.3,431.7 1078.1,436.0" fill="#f5873a" stroke="#c8641e" stroke-width="0.7" stroke-linejoin="round"/><polygon points="1117.3,431.7 1137.5,428.5 1136.2,436.6 1130.8,437.9 1130.2,443.3 1126.7,444.1 1126.2,439.3 1118.6,440.4" fill="#f28a44"/><polygon points="1120.0,434.4 1134.8,432.0 1134.8,433.9 1120.0,436.6" fill="#fff"/><polygon points="1071.7,413.9 1076.5,413.4 1076.5,415.8 1071.7,416.3" fill="#2cd850" stroke="#b05a18" stroke-width="0.5" stroke-linejoin="round"/><polygon points="1081.1,422.0 1086.0,421.5 1086.0,423.9 1081.1,424.4" fill="#2cd850" stroke="#b05a18" stroke-width="0.5" stroke-linejoin="round"/><polygon points="1098.7,419.3 1103.5,418.8 1103.5,421.2 1098.7,421.7" fill="#2cd850" stroke="#b05a18" stroke-width="0.5" stroke-linejoin="round"/><polygon points="1114.9,417.1 1119.7,416.6 1119.7,419.0 1114.9,419.6" fill="#2cd850" stroke="#b05a18" stroke-width="0.5" stroke-linejoin="round"/></svg>
<svg style="position:absolute;left:444px;top:62px" width="32" height="33" viewBox="0 0 32 33">
<rect x="0.1" y="0.25" width="31.4" height="31.75" fill="#8db572"/>
<rect x="0.1" y="8.4" width="3.2" height="16.5" fill="#bcd5ad"/><rect x="28.3" y="8.4" width="3.2" height="16.5" fill="#bcd5ad"/>
<rect x="0.4" y="14.9" width="2.4" height="1.4" fill="#8db572"/><rect x="0.4" y="21.1" width="2.4" height="1.4" fill="#8db572"/>
<rect x="29" y="14.9" width="2.4" height="1.4" fill="#8db572"/><rect x="29" y="21.1" width="2.4" height="1.4" fill="#8db572"/>
<rect x="3" y="4" width="25.6" height="26" fill="none" stroke="#c3dab6" stroke-width="0.7"/>
<path d="M3.7 8.4L11.2 16.6L3.7 24.9ZM28.1 8.4L19.9 16.6L28.1 24.9Z" fill="#d4e5ca"/>
<path d="M3.7 8.4H10.6L15.6 12.3L20.9 8.4H28.1L19.9 16.4L28.1 24.9H20.9L15.6 20.6L10.6 24.9H3.7L11.2 16.4Z" fill="#fff"/>
</svg>
<svg style="position:absolute;left:1382px;top:60px" width="41" height="41"><circle cx="20.5" cy="20.6" r="19.3" fill="#70ea9c"/>
<rect x="6.6" y="15.4" width="14.6" height="10.4" rx="5.2" fill="none" stroke="#fff" stroke-width="2.2"/>
<rect x="19.8" y="15.4" width="14.6" height="10.4" rx="5.2" fill="none" stroke="#fff" stroke-width="2.2"/>
<path d="M13 20.6H28" stroke="#fff" stroke-width="2.2"/></svg>
<svg style="position:absolute;left:1370px;top:388px" width="95" height="100" viewBox="1370 388 95 100">
<ellipse cx="1413" cy="468" rx="37" ry="16" fill="#c2c2c2"/>
<path d="M1377.5 395.5L1398 394.8L1454.7 394.8L1452 453.9L1399 467.5L1379.7 447Z" fill="#fff" stroke="#444" stroke-width="1" stroke-linejoin="round"/>
<path d="M1398 394.8L1399 467.5" stroke="#444" stroke-width="1"/>
<g transform="translate(1428,428.8) rotate(-7) scale(0.9,1.25)"><text x="0" y="6" text-anchor="middle" font-family="Liberation Sans, sans-serif" font-size="17" fill="#222">Left</text></g>
<g transform="translate(1387.4,426.6) skewY(32) scale(0.34,1.15)"><text x="0" y="4" text-anchor="middle" font-family="Liberation Sans, sans-serif" font-size="14" fill="#4a4a4a" stroke="#4a4a4a" stroke-width="0.5">Back</text></g>
</svg>
<div style="position:absolute;left:521.6px;top:477px;width:685.8px;height:43px;background:#26272c;border-radius:4px 0 0 4px;"></div>
<div style="position:absolute;left:1209.6px;top:477px;width:104.6px;height:43px;background:#26272c;"></div>
<div style="position:absolute;left:1316.8px;top:477px;width:92.8px;height:43px;background:#26272c;border-radius:0 4px 4px 0;"></div>
<div style="position:absolute;left:595.4px;top:481px;width:41.6px;height:35px;background:#8fb672;border-radius:4px;"></div>
<div style="position:absolute;left:789px;top:481px;width:41.6px;height:35px;background:#8fb672;border-radius:4px;"></div>
<svg style="position:absolute;left:539.6px;top:485.0px" width="26" height="26" viewBox="-13.0 -13.0 26 26" fill="none" stroke="#f2f2f2" stroke-width="1.1" stroke-linecap="round" stroke-linejoin="round"><path d="M-7.7 2.3A8 8 0 0 1 7 -4.2M7.7 -2.3A8 8 0 0 1 -7 4.2"/><path d="M8.6 -7.8L7.2 -3.9L3.3 -5.1M-8.6 7.8L-7.2 3.9L-3.3 5.1"/></svg>
<svg style="position:absolute;left:603.0px;top:485.0px" width="26" height="26" viewBox="-13.0 -13.0 26 26" fill="none" stroke="#f2f2f2" stroke-width="1.1" stroke-linecap="round" stroke-linejoin="round"><rect x="-9.2" y="-10.5" width="7" height="7" stroke-width="1.5"/><path d="M1 -8.5H4.2A3.6 3.6 0 0 1 7.8 -4.9V-4" stroke-width="1.5"/><path d="M3.4 -11L0.6 -8.5L3.4 -6" stroke-width="1.5"/><path d="M-9 0.6V1.5A3.6 3.6 0 0 0 -5.4 5.1H-2" stroke-width="1.5"/><path d="M-4.4 2.6L-1.6 5.1L-4.4 7.6" stroke-width="1.5"/><path d="M1.6 4.2L4.6 1.8H9.6V7.4L6.8 10H1.6ZM1.6 4.2H6.8V10M6.8 4.2L9.6 1.8" stroke-width="1.4"/></svg>
<svg style="position:absolute;left:646.0px;top:485.0px" width="26" height="26" viewBox="-13.0 -13.0 26 26" fill="none" stroke="#f2f2f2" stroke-width="1.1" stroke-linecap="round" stroke-linejoin="round"><path d="M0 -10.5V-6.8M0 -6.8L6 -3.6V3.8L0 7.2L-6 3.8V-3.6ZM-6 -3.6L0 -0.4L6 -3.6M0 -0.4V7.2M-6 3.8L-9.4 5.8M6 3.8L9.4 5.8"/></svg>
<svg style="position:absolute;left:689.0px;top:485.0px" width="26" height="26" viewBox="-13.0 -13.0 26 26" fill="none" stroke="#f2f2f2" stroke-width="1.1" stroke-linecap="round" stroke-linejoin="round"><path d="M-9.6 -9.6L-3 -3M-3 -7.6V-3H-7.6M9.6 -9.6L3 -3M3 -7.6V-3H7.6M-9.6 9.6L-3 3M-3 7.6V3H-7.6M9.6 9.6L3 3M3 7.6V3H7.6"/></svg>
<svg style="position:absolute;left:732.5px;top:485.0px" width="26" height="26" viewBox="-13.0 -13.0 26 26" fill="none" stroke="#f2f2f2" stroke-width="1.1" stroke-linecap="round" stroke-linejoin="round"><circle cx="0" cy="-7.4" r="2.6"/><path d="M-2.2 -3.6H2.2A2.6 2.6 0 0 1 4.8 -1V2.6A1.6 1.6 0 0 1 3.2 4.2H2.6V8.6A1 1 0 0 1 1.6 9.6H-1.6A1 1 0 0 1 -2.6 8.6V4.2H-3.2A1.6 1.6 0 0 1 -4.8 2.6V-1A2.6 2.6 0 0 1 -2.2 -3.6Z"/></svg>
<svg style="position:absolute;left:796.6px;top:485.0px" width="26" height="26" viewBox="-13.0 -13.0 26 26" fill="none" stroke="#f2f2f2" stroke-width="1.1" stroke-linecap="round" stroke-linejoin="round"><path d="M-6.6 -7.6L4.4 -3.2L0.4 -0.8L5.8 4.8L3.6 6.8L-1.6 1.2L-3.6 5.2Z" stroke-width="1.2"/></svg>
<svg style="position:absolute;left:839.8px;top:485.0px" width="26" height="26" viewBox="-13.0 -13.0 26 26" fill="none" stroke="#f2f2f2" stroke-width="1.1" stroke-linecap="round" stroke-linejoin="round"><path d="M-2.5 6.2H-7A1.6 1.6 0 0 1 -8.6 4.6V-8A1.6 1.6 0 0 1 -7 -9.6H5A1.6 1.6 0 0 1 6.6 -8V-3" stroke="#bdbdbd"/><path d="M-1.6 -2.6L6.4 0.4L3.2 1.8L5.6 5.6L4 6.6L1.6 2.8L-0.6 5Z" stroke="#cfcfcf" stroke-width="1"/><path d="M-3.6 9.6H10M10 9.6V-3.4" stroke="#bdbdbd" stroke-dasharray="1.6 1.8" stroke-width="1.2"/></svg>
<svg style="position:absolute;left:882.6px;top:485.0px" width="26" height="26" viewBox="-13.0 -13.0 26 26" fill="none" stroke="#f2f2f2" stroke-width="1.1" stroke-linecap="round" stroke-linejoin="round"><path d="M-6.6 -3.2L-1.2 -6.2H3.6L-1.4 -3.2Z" fill="#fff" stroke-width="0.8"/><path d="M-6.4 -2.6H-1.4V6H-6.4Z" stroke-width="1.5"/><path d="M-0.2 -3.6L7.2 -10V6.4L-0.2 9.2Z" fill="#fff" stroke-width="0.8"/></svg>
<svg style="position:absolute;left:915px;top:493.2px" width="13" height="8"><path d="M0.4 0.4H12.6L6.5 7.2Z" fill="#fff"/></svg>
<span style="position:absolute;display:block;top:491.16px;font-size:12.4px;line-height:14.88px;color:#fff;white-space:nowrap;transform:scaleX(1.0877);transform-origin:0 0;font-weight:bold;left:942.90px;">0</span>
<svg style="position:absolute;left:974.5px;top:485.0px" width="26" height="26" viewBox="-13.0 -13.0 26 26" fill="none" stroke="#f2f2f2" stroke-width="1.1" stroke-linecap="round" stroke-linejoin="round"><path d="M-8.6 -9.8L9.6 9H-8.6Z" stroke="#d4d4d4"/><path d="M-5.4 -0.8L4 6H-5.4Z" stroke="#d4d4d4" stroke-width="1.2"/><path d="M-5.4 -6.5L-4 -5M-2.4 -3.4L-1 -2M0.6 -0.4L2 1M3.6 2.6L5 4" stroke="#d4d4d4" stroke-width="0.8"/></svg>
<svg style="position:absolute;left:1018.0px;top:485.0px" width="26" height="26" viewBox="-13.0 -13.0 26 26" fill="none" stroke="#f2f2f2" stroke-width="1.1" stroke-linecap="round" stroke-linejoin="round"><rect x="-9.6" y="-10.2" width="15.6" height="15.6" rx="1" stroke="#d8d8d8"/><circle cx="-4.8" cy="-5.8" r="1.5" stroke="#d8d8d8"/><path d="M-7.6 3L-3.4 -1.4L-1.2 1L1.6 -3L4.4 3Z" stroke="#d8d8d8"/><path d="M-7.6 7.2H7.8V-7.6M-5.6 9.2H9.6V-5.6" stroke="#c8c8c8"/></svg>
<svg style="position:absolute;left:1059.8px;top:484.4px" width="28" height="28" viewBox="-14 -14 28 28">
<path d="M-11.6 1.4C-12.6 -7.6 -6.4 -12.9 -1 -12.7C4.6 -12.5 7 -7.4 7.2 3.6C5.4 -3.8 2.2 -8.3 -2 -8.2C-6.2 -8 -9.6 -3.6 -11.6 1.4Z" fill="#2a78b8" transform="rotate(118) translate(0.2,-0.3)"/>
<path d="M-11.6 1.4C-12.6 -7.6 -6.4 -12.9 -1 -12.7C4.6 -12.5 7 -7.4 7.2 3.6C5.4 -3.8 2.2 -8.3 -2 -8.2C-6.2 -8 -9.6 -3.6 -11.6 1.4Z" fill="#b3119e"/>
<path d="M-11.6 1.4C-12.6 -7.6 -6.4 -12.9 -1 -12.7C4.6 -12.5 7 -7.4 7.2 3.6C5.4 -3.8 2.2 -8.3 -2 -8.2C-6.2 -8 -9.6 -3.6 -11.6 1.4Z" fill="#f0103c" transform="rotate(236) translate(0,-0.4)"/>
<g transform="rotate(118) translate(0.2,-0.3)"><path d="M6.6 -5C7.1 -2.6 7.2 0.4 7.2 3.6C6.4 0.4 5.4 -2.4 4.2 -4.6Z" fill="#2a78b8"/></g>
</svg>
<svg style="position:absolute;left:1123.8px;top:483.5px" width="26" height="26" viewBox="-13.0 -13.0 26 26" fill="none" stroke="#f2f2f2" stroke-width="1.1" stroke-linecap="round" stroke-linejoin="round"><circle cx="-8" cy="-5.6" r="1.5"/><circle cx="-8" cy="0" r="1.5"/><circle cx="-8" cy="5.6" r="1.5"/><path d="M-3.6 -5.6H8.6M-3.6 0H8.6M-3.6 5.6H8.6" stroke="#d4d4d4"/></svg>
<svg style="position:absolute;left:1164.5px;top:483.5px" width="26" height="26" viewBox="-13.0 -13.0 26 26" fill="none" stroke="#f2f2f2" stroke-width="1.1" stroke-linecap="round" stroke-linejoin="round"><path d="M-1.65 -6.18 L-1.37 -8.49 L1.37 -8.49 L1.65 -6.18 L3.21 -5.54 L5.03 -6.97 L6.97 -5.03 L5.54 -3.21 L6.18 -1.65 L8.49 -1.37 L8.49 1.37 L6.18 1.65 L5.54 3.21 L6.97 5.03 L5.03 6.97 L3.21 5.54 L1.65 6.18 L1.37 8.49 L-1.37 8.49 L-1.65 6.18 L-3.21 5.54 L-5.03 6.97 L-6.97 5.03 L-5.54 3.21 L-6.18 1.65 L-8.49 1.37 L-8.49 -1.37 L-6.18 -1.65 L-5.54 -3.21 L-6.97 -5.03 L-5.03 -6.97 L-3.21 -5.54Z" stroke="#d8d8d8" stroke-width="1"/><circle r="3.2" stroke="#d8d8d8"/></svg>
<svg style="position:absolute;left:1227.5px;top:484.5px" width="26" height="26" viewBox="-13.0 -13.0 26 26" fill="none" stroke="#f2f2f2" stroke-width="1.1" stroke-linecap="round" stroke-linejoin="round"><rect x="-1.8" y="-1.8" width="3.6" height="3.6"/><path d="M-9.6 -9.6L-4 -4M-4 -8V-4H-8M9.6 -9.6L4 -4M4 -8V-4H8M-9.6 9.6L-4 4M-4 8V4H-8M9.6 9.6L4 4M4 8V4H8"/></svg>
<svg style="position:absolute;left:1269.7px;top:484.5px" width="26" height="26" viewBox="-13.0 -13.0 26 26" fill="none" stroke="#f2f2f2" stroke-width="1.1" stroke-linecap="round" stroke-linejoin="round"><path d="M0 -9.6L7.6 -6V1.2M0 -9.6L-7.6 -6V3.4L-1.6 6.4M-7.6 -6L0 -2.6L7.6 -6M0 -2.6V2" stroke="#777"/><path d="M-0.6 6.2C1.4 3.4 3.6 2.2 5.6 2.2S9.6 3.4 11.6 6.2C9.6 9 7.6 10.2 5.6 10.2S1.4 9 -0.6 6.2Z" stroke="#777"/><circle cx="5.6" cy="6.2" r="1.8" stroke="#777"/></svg>
<span style="position:absolute;display:block;top:483.36px;font-size:8.4px;line-height:10.08px;color:#fff;white-space:nowrap;transform:scaleX(0.9529);transform-origin:0 0;font-weight:bold;left:1330.40px;">Selected Elements:</span>
<span style="position:absolute;display:block;top:496.80px;font-size:14px;line-height:16.80px;color:#fff;white-space:nowrap;transform:scaleX(1.0533);transform-origin:0 0;font-weight:bold;left:1362.70px;">0</span>
<div style="position:absolute;left:0px;top:542px;width:1487px;height:162px;background:#000;"></div>
<div style="position:absolute;left:0px;top:560.5px;width:1487px;height:143.5px;background:#222222;"></div>
<div style="position:absolute;left:0px;top:546.5px;width:108px;height:14.5px;background:#6c6c6c;"></div>
<div style="position:absolute;left:109.5px;top:546.5px;width:61.80000000000001px;height:14.5px;background:#161616;"></div>
<div style="position:absolute;left:173px;top:546.5px;width:57.69999999999999px;height:14.5px;background:#161616;"></div>
<div style="position:absolute;left:232.7px;top:546.5px;width:85.90000000000003px;height:14.5px;background:#161616;"></div>
<div style="position:absolute;left:320.3px;top:546.5px;width:59.39999999999998px;height:14.5px;background:#161616;"></div>
<span style="position:absolute;display:block;top:548.08px;font-size:10.2px;line-height:12.24px;color:#fff;white-space:nowrap;transform:scaleX(0.9165);transform-origin:0 0;left:1.20px;">Schedule Animations</span>
<svg style="position:absolute;left:95.3px;top:549.5999999999999px" width="8.4" height="8.4"><path d="M1 1L7.4 7.4M7.4 1L1 7.4" stroke="#fff" stroke-width="1" fill="none"/></svg>
<span style="position:absolute;display:block;top:548.08px;font-size:10.2px;line-height:12.24px;color:#d6d6d6;white-space:nowrap;transform:scaleX(0.9007);transform-origin:0 0;left:117.70px;">Sources</span>
<svg style="position:absolute;left:157.8px;top:549.5999999999999px" width="8.4" height="8.4"><path d="M1 1L7.4 7.4M7.4 1L1 7.4" stroke="#7a7a7a" stroke-width="1" fill="none"/></svg>
<span style="position:absolute;display:block;top:548.08px;font-size:10.2px;line-height:12.24px;color:#d6d6d6;white-space:nowrap;transform:scaleX(0.9230);transform-origin:0 0;left:180.60px;">Scenes</span>
<svg style="position:absolute;left:218.3px;top:549.5999999999999px" width="8.4" height="8.4"><path d="M1 1L7.4 7.4M7.4 1L1 7.4" stroke="#7a7a7a" stroke-width="1" fill="none"/></svg>
<span style="position:absolute;display:block;top:548.08px;font-size:10.2px;line-height:12.24px;color:#d6d6d6;white-space:nowrap;transform:scaleX(0.9152);transform-origin:0 0;left:241.20px;">Cost Estimate</span>
<svg style="position:absolute;left:305.6px;top:549.5999999999999px" width="8.4" height="8.4"><path d="M1 1L7.4 7.4M7.4 1L1 7.4" stroke="#7a7a7a" stroke-width="1" fill="none"/></svg>
<span style="position:absolute;display:block;top:548.08px;font-size:10.2px;line-height:12.24px;color:#d6d6d6;white-space:nowrap;transform:scaleX(0.9044);transform-origin:0 0;left:328.00px;">Reports</span>
<svg style="position:absolute;left:367.3px;top:549.5999999999999px" width="8.4" height="8.4"><path d="M1 1L7.4 7.4M7.4 1L1 7.4" stroke="#7a7a7a" stroke-width="1" fill="none"/></svg>
<svg style="position:absolute;left:1465px;top:550px" width="8" height="8"><rect x="0.5" y="1" width="6" height="5.5" stroke="#8a8a8a" stroke-width="1" fill="none"/><path d="M0.5 1.2H6.5" stroke="#8a8a8a" stroke-width="1.4"/></svg>
<svg style="position:absolute;left:1477.6px;top:549.1px" width="8.8" height="8.8"><path d="M1 1L7.8 7.8M7.8 1L1 7.8" stroke="#6a6a6a" stroke-width="1" fill="none"/></svg>
<div style="position:absolute;left:-3px;top:569.5px;width:350px;height:26.5px;border:1px solid #3e3e3e;border-radius:3px;background:#262626"></div>
<span style="position:absolute;display:block;top:577.20px;font-size:12px;line-height:14.40px;color:#f4f4f4;white-space:nowrap;transform:scaleX(0.8968);transform-origin:0 0;left:5.10px;">Dec Actual 24</span>
<svg style="position:absolute;left:330px;top:581.5px" width="8" height="5"><path d="M0 0.3H7.4L3.7 4.3Z" fill="#f0f0f0"/></svg>
<div style="position:absolute;left:356.2px;top:569.5px;width:67.5px;height:26.5px;border:1px solid #3e3e3e;border-radius:3px;background:#262626"></div>
<svg style="position:absolute;left:365.5px;top:577.5px" width="12" height="12"><path d="M1 1L10.6 11M10.6 1L1 11" stroke="#12a6c4" stroke-width="1.6" fill="none"/></svg>
<span style="position:absolute;display:block;top:577.40px;font-size:12px;line-height:14.40px;color:#f4f4f4;white-space:nowrap;transform:scaleX(0.8851);transform-origin:0 0;left:385.80px;">Delete</span>
<div style="position:absolute;left:433.2px;top:569.5px;width:125.3px;height:26.5px;border:1px solid #3e3e3e;border-radius:3px;background:#262626"></div>
<span style="position:absolute;display:block;top:576.70px;font-size:12px;line-height:14.40px;color:#f4f4f4;white-space:nowrap;transform:scaleX(0.9342);transform-origin:0 0;left:437.30px;">Animation Mode</span>
<div style="position:absolute;left:522.2px;top:574.6px;width:32.3px;height:16.6px;border:1px solid #3a3a3a;border-radius:2px;background:#1f1f1f"></div>
<span style="position:absolute;display:block;top:580.44px;font-size:7.6px;line-height:9.12px;color:#f0f0f0;white-space:nowrap;transform:scaleX(0.9474);transform-origin:0 0;font-weight:bold;left:527.60px;">ON</span>
<div style="position:absolute;left:543px;top:576.5px;width:11.5px;height:14.5px;background:#0aa5e2;border-radius:1.5px;"></div>
<div style="position:absolute;left:568.1px;top:569.8px;width:24.4px;height:26px;border:1px solid #3e3e3e;border-radius:3px;background:#282828"></div>
<div style="position:absolute;left:594.4px;top:569.8px;width:24.6px;height:26px;border:1px solid #3e3e3e;border-radius:3px;background:#282828"></div>
<div style="position:absolute;left:620.9px;top:569.8px;width:24.9px;height:26px;border:1px solid #3e3e3e;border-radius:3px;background:#282828"></div>
<svg style="position:absolute;left:574px;top:577px" width="15" height="14"><path d="M1.2 0.6H4.4V13H1.2ZM13.6 0.9L6.6 6.8L13.6 12.8Z" stroke="#c4c4c4" stroke-width="1" fill="none"/></svg>
<svg style="position:absolute;left:601px;top:577.5px" width="14" height="13"><path d="M1.4 0.6L12.2 6.2L1.4 11.8Z" fill="#7cb342"/></svg>
<svg style="position:absolute;left:626.5px;top:577px" width="15" height="14"><path d="M10.9 0.6H14.1V13H10.9ZM1.8 0.9L9 6.8L1.8 12.8Z" stroke="#c4c4c4" stroke-width="1" fill="none"/></svg>
<div style="position:absolute;left:655.7px;top:569.5px;width:124.1px;height:26.5px;border:1px solid #3e3e3e;border-radius:3px;background:#262626"></div>
<span style="position:absolute;display:block;top:576.70px;font-size:12px;line-height:14.40px;color:#f4f4f4;white-space:nowrap;transform:scaleX(0.9053);transform-origin:0 0;left:659.70px;">Animate Opacity</span>
<div style="position:absolute;left:743.8px;top:574.6px;width:32px;height:16.6px;border:1px solid #3a3a3a;border-radius:2px;background:#1f1f1f"></div>
<div style="position:absolute;left:745.8px;top:576.5px;width:11.5px;height:14.5px;background:#0a6f9c;border-radius:1.5px;"></div>
<span style="position:absolute;display:block;top:580.44px;font-size:7.6px;line-height:9.12px;color:#7c7c7c;white-space:nowrap;transform:scaleX(0.7568);transform-origin:0 0;left:760.00px;">OFF</span>
<div style="position:absolute;left:789.8px;top:569.5px;width:123.5px;height:26.5px;border:1px solid #3e3e3e;border-radius:3px;background:#262626"></div>
<span style="position:absolute;display:block;top:576.70px;font-size:12px;line-height:14.40px;color:#f4f4f4;white-space:nowrap;transform:scaleX(0.8886);transform-origin:0 0;left:793.20px;">Animate Camera</span>
<div style="position:absolute;left:877.3px;top:574.6px;width:31.6px;height:16.6px;border:1px solid #333;border-radius:2px;background:#1f1f1f"></div>
<div style="position:absolute;left:879.5px;top:576.5px;width:11.5px;height:14.5px;background:#174e66;border-radius:1.5px;"></div>
<span style="position:absolute;display:block;top:580.44px;font-size:7.6px;line-height:9.12px;color:#4a4a4a;white-space:nowrap;transform:scaleX(0.7568);transform-origin:0 0;left:893.50px;">OFF</span>
<div style="position:absolute;left:922.9px;top:569.5px;width:166.1px;height:26.5px;border:1px solid #3e3e3e;border-radius:3px;background:#262626"></div>
<span style="position:absolute;display:block;top:576.70px;font-size:12px;line-height:14.40px;color:#f4f4f4;white-space:nowrap;transform:scaleX(0.8787);transform-origin:0 0;left:927.60px;">Duration (seconds):</span>
<div style="position:absolute;left:1024.8px;top:574.7px;width:59.5px;height:16px;border:1px solid #3a3a3a;border-radius:2px;background:#1f1f1f"></div>
<span style="position:absolute;display:block;top:578.00px;font-size:11px;line-height:13.20px;color:#f4f4f4;white-space:nowrap;transform:scaleX(0.9645);transform-origin:0 0;left:1031.50px;">30</span>
<svg style="position:absolute;left:1069px;top:577px" width="8" height="14"><path d="M0.6 4.4L3.6 0.8L6.6 4.4ZM0.6 8.8L3.6 12.4L6.6 8.8Z" fill="#f0f0f0"/></svg>
<span style="position:absolute;display:block;top:611.00px;font-size:10px;line-height:12.00px;color:#f0f0f0;white-space:nowrap;transform:scaleX(0.9253);transform-origin:0 0;left:-3.40px;">Date: Thu Aug 21 2025</span>
<span style="position:absolute;display:block;top:623.90px;font-size:10px;line-height:12.00px;color:#f0f0f0;white-space:nowrap;transform:scaleX(0.9114);transform-origin:0 0;left:-3.40px;">Week: 137</span>
<span style="position:absolute;display:block;top:637.10px;font-size:10px;line-height:12.00px;color:#f0f0f0;white-space:nowrap;transform:scaleX(0.9760);transform-origin:0 0;left:-3.40px;">Month: 32</span>
<span style="position:absolute;display:block;top:650.20px;font-size:10px;line-height:12.00px;color:#f0f0f0;white-space:nowrap;transform:scaleX(0.9230);transform-origin:0 0;left:-3.40px;">Completed Cost: $0.00</span>
<span style="position:absolute;display:block;top:663.10px;font-size:10px;line-height:12.00px;color:#f0f0f0;white-space:nowrap;transform:scaleX(0.9134);transform-origin:0 0;left:-3.40px;">Completed Percentage: 0.00%</span>
<span style="position:absolute;display:block;top:676.30px;font-size:10px;line-height:12.00px;color:#f0f0f0;white-space:nowrap;transform:scaleX(0.9240);transform-origin:0 0;left:-3.40px;">Interval Type: Daily</span>
<span style="position:absolute;display:block;top:658.00px;font-size:10px;line-height:12.00px;color:#f0f0f0;white-space:nowrap;transform:scaleX(0.8934);transform-origin:0 0;left:303.60px;">Start Date:</span>
<span style="position:absolute;display:block;top:670.80px;font-size:10px;line-height:12.00px;color:#f0f0f0;white-space:nowrap;transform:scaleX(0.8722);transform-origin:0 0;left:303.60px;">Fri Jan 06 2023</span>
<span style="position:absolute;display:block;top:657.90px;font-size:10px;line-height:12.00px;color:#f0f0f0;white-space:nowrap;transform:scaleX(0.8866);transform-origin:0 0;left:1417.20px;">Finish Date:</span>
<span style="position:absolute;display:block;top:670.80px;font-size:10px;line-height:12.00px;color:#f0f0f0;white-space:nowrap;transform:scaleX(0.9442);transform-origin:0 0;left:1417.20px;">Wed Oct 28 2026</span>
<div style="position:absolute;left:309.3px;top:641.7px;width:1164px;height:3.4px;background:#4d4d4d;border-radius:2px;"></div>
<div style="position:absolute;left:309.3px;top:641.4px;width:784px;height:4px;background:#0aa5e2;border-radius:2px;"></div>
<div style="position:absolute;left:1088.3px;top:632px;width:11.5px;height:23px;background:#0aa5e2;border-radius:2px;"></div>
</div></body></html>
